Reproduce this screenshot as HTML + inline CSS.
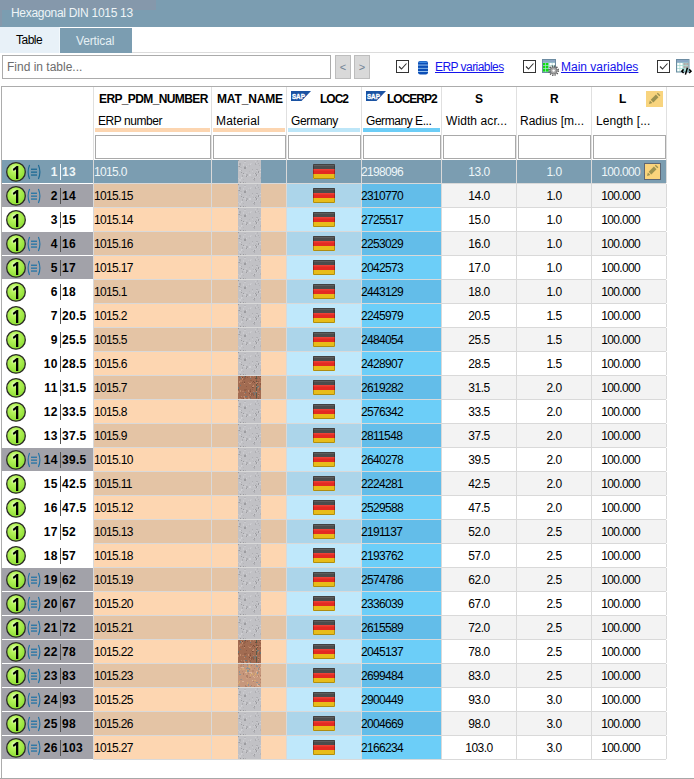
<!DOCTYPE html><html><head><meta charset="utf-8"><style>
*{margin:0;padding:0;box-sizing:border-box}
html,body{width:694px;height:779px;overflow:hidden;background:#fff}
body{position:relative;font-family:"Liberation Sans",sans-serif;font-size:12px;color:#000}
.abs{position:absolute}
.tx{position:absolute;line-height:14px;white-space:nowrap}
.flag{position:absolute;width:22px;height:15px;border-radius:2px;overflow:hidden;box-shadow:inset 0 0 0 1px rgba(0,0,0,.18)}
.flag i{display:block;height:5px}
.circ{position:absolute;left:6px;width:20px;height:20px;border-radius:50%;background:radial-gradient(circle at 40% 35%,#d8ff90 0%,#9be03a 45%,#6cc414 100%);border:1.5px solid #2d3a22}
.circ span{position:absolute;left:0;top:0;width:17px;text-align:center;font-weight:bold;font-size:15px;line-height:17px;color:#000}
.tex{position:absolute;left:238px;width:23px;height:24px}
.pencil{position:absolute;width:17px;height:17px;background:#f7d27e}
.cb{position:absolute;top:60px;width:13px;height:13px;border:1px solid #333;background:#fff}
.cb svg{position:absolute;left:0px;top:0px}
.filt{position:absolute;top:135px;height:24px;border:1px solid #a9a9a9;background:#fff}
.hbar{position:absolute;top:128px;height:4px}
</style></head><body>

<svg width="0" height="0" style="position:absolute">
<defs>
<radialGradient id="gg" cx="0.42" cy="0.32" r="0.75"><stop offset="0" stop-color="#f0ffd8"/><stop offset="0.28" stop-color="#b6f45c"/><stop offset="1" stop-color="#86da2c"/></radialGradient>
<symbol id="circ" viewBox="0 0 22 22"><circle cx="11" cy="10.9" r="9.3" fill="url(#gg)" stroke="#2a2a26" stroke-width="1.3"/>
<path d="M7.8 8.0 L11.6 5.0 L13.3 5.0 L13.3 17.9 L11.0 17.9 L11.0 8.3 L8.6 10.0 Z" fill="#000"/></symbol>
<symbol id="docic" viewBox="0 0 16 16"><path d="M3.6 1 Q0.6 8 3.6 15" fill="none" stroke="currentColor" stroke-width="1.15"/><path d="M12.4 1 Q15.4 8 12.4 15" fill="none" stroke="currentColor" stroke-width="1.15"/>
<rect x="5" y="4.6" width="6" height="1.3" fill="currentColor"/><rect x="5" y="7.5" width="6" height="1.3" fill="currentColor"/><rect x="5" y="10.4" width="6" height="1.3" fill="currentColor"/></symbol>
<symbol id="flag" viewBox="0 0 22 15"><rect x="0" y="0" width="22" height="5" fill="#4c4c4c"/><rect x="0" y="0.6" width="22" height="0.9" fill="#6e6e6e"/>
<rect x="0" y="5" width="22" height="5" fill="#e42a22"/><rect x="0" y="5.3" width="22" height="1" fill="#f04a40"/>
<rect x="0" y="10" width="22" height="5" fill="#e8bc18"/>
<rect x="0.5" y="0.5" width="21" height="14" rx="1" fill="none" stroke="rgba(0,0,0,0.25)" stroke-width="1"/></symbol>
<symbol id="pen" viewBox="0 0 17 16"><path d="M3 13 L3.9 9.6 L6.4 12.1 Z" fill="#9c9250"/><path d="M4.7 8.8 L9.9 3.6 L12.5 6.2 L7.3 11.4 Z" fill="#9c9250"/><path d="M10.8 2.7 L11.8 1.7 L14.4 4.3 L13.4 5.3 Z" fill="#9c9250"/></symbol>
<pattern id="tg" width="23" height="23" patternUnits="userSpaceOnUse"><rect width="23" height="23" fill="#c1c1c5"/><rect x="10" y="4" width="1" height="1" fill="#c8c8cc"/><rect x="17" y="3" width="1" height="2" fill="#bbbbbf"/><rect x="6" y="1" width="2" height="1" fill="#b6b6ba"/><rect x="2" y="7" width="2" height="1" fill="#b6b6ba"/><rect x="18" y="3" width="1" height="2" fill="#cbcbcf"/><rect x="18" y="12" width="1" height="1" fill="#b6b6ba"/><rect x="17" y="4" width="2" height="1" fill="#bbbbbf"/><rect x="17" y="3" width="1" height="2" fill="#aeaeb2"/><rect x="21" y="5" width="1" height="1" fill="#b6b6ba"/><rect x="3" y="17" width="1" height="2" fill="#d0d0d4"/><rect x="1" y="19" width="2" height="2" fill="#cbcbcf"/><rect x="17" y="13" width="1" height="1" fill="#9c9ca0"/><rect x="18" y="14" width="1" height="1" fill="#bbbbbf"/><rect x="5" y="22" width="1" height="1" fill="#9c9ca0"/><rect x="18" y="9" width="2" height="1" fill="#aeaeb2"/><rect x="14" y="9" width="1" height="1" fill="#aeaeb2"/><rect x="16" y="13" width="1" height="1" fill="#cbcbcf"/><rect x="15" y="13" width="1" height="2" fill="#b6b6ba"/><rect x="18" y="10" width="1" height="2" fill="#bbbbbf"/><rect x="15" y="18" width="2" height="1" fill="#9c9ca0"/><rect x="2" y="8" width="1" height="1" fill="#c8c8cc"/><rect x="22" y="9" width="2" height="1" fill="#d0d0d4"/><rect x="22" y="12" width="1" height="1" fill="#d0d0d4"/><rect x="14" y="11" width="1" height="1" fill="#cbcbcf"/><rect x="1" y="6" width="1" height="1" fill="#9c9ca0"/><rect x="7" y="12" width="2" height="1" fill="#c8c8cc"/><rect x="5" y="14" width="1" height="1" fill="#c8c8cc"/><rect x="13" y="17" width="2" height="1" fill="#bbbbbf"/><rect x="21" y="12" width="1" height="1" fill="#cbcbcf"/><rect x="5" y="4" width="1" height="1" fill="#cbcbcf"/><rect x="15" y="18" width="1" height="1" fill="#cbcbcf"/><rect x="0" y="4" width="1" height="2" fill="#c8c8cc"/><rect x="18" y="10" width="1" height="1" fill="#cbcbcf"/><rect x="21" y="17" width="2" height="1" fill="#c8c8cc"/><rect x="12" y="3" width="2" height="1" fill="#c8c8cc"/><rect x="6" y="2" width="2" height="1" fill="#cbcbcf"/><rect x="3" y="10" width="1" height="1" fill="#aeaeb2"/><rect x="0" y="18" width="1" height="1" fill="#cbcbcf"/><rect x="19" y="0" width="1" height="2" fill="#b6b6ba"/><rect x="12" y="4" width="1" height="1" fill="#d0d0d4"/><rect x="19" y="11" width="1" height="1" fill="#c8c8cc"/><rect x="15" y="14" width="2" height="1" fill="#c8c8cc"/><rect x="2" y="4" width="1" height="2" fill="#b6b6ba"/><rect x="8" y="15" width="1" height="2" fill="#9c9ca0"/><rect x="0" y="6" width="1" height="1" fill="#aeaeb2"/><rect x="22" y="17" width="1" height="2" fill="#b6b6ba"/><rect x="2" y="22" width="1" height="2" fill="#9c9ca0"/><rect x="11" y="5" width="1" height="2" fill="#bbbbbf"/><rect x="17" y="16" width="1" height="2" fill="#bbbbbf"/><rect x="6" y="7" width="2" height="2" fill="#9c9ca0"/><rect x="7" y="6" width="2" height="1" fill="#aeaeb2"/><rect x="0" y="0" width="1" height="1" fill="#9c9ca0"/><rect x="8" y="6" width="1" height="1" fill="#d0d0d4"/><rect x="11" y="11" width="1" height="1" fill="#b6b6ba"/><rect x="7" y="15" width="1" height="1" fill="#cbcbcf"/><rect x="15" y="19" width="1" height="1" fill="#aeaeb2"/><rect x="20" y="11" width="1" height="2" fill="#9c9ca0"/><rect x="3" y="12" width="1" height="1" fill="#9c9ca0"/><rect x="5" y="13" width="1" height="1" fill="#9c9ca0"/><rect x="12" y="14" width="1" height="2" fill="#c8c8cc"/><rect x="5" y="5" width="1" height="1" fill="#cbcbcf"/><rect x="18" y="14" width="1" height="2" fill="#9c9ca0"/><rect x="19" y="15" width="1" height="1" fill="#d0d0d4"/><rect x="17" y="17" width="1" height="1" fill="#cbcbcf"/><rect x="20" y="3" width="1" height="1" fill="#aeaeb2"/><rect x="6" y="6" width="1" height="1" fill="#b6b6ba"/><rect x="9" y="16" width="1" height="1" fill="#cbcbcf"/><rect x="17" y="13" width="1" height="1" fill="#9c9ca0"/><rect x="11" y="14" width="2" height="2" fill="#d0d0d4"/><rect x="4" y="17" width="1" height="1" fill="#cbcbcf"/><rect x="5" y="19" width="1" height="1" fill="#b6b6ba"/><rect x="4" y="15" width="1" height="2" fill="#aeaeb2"/><rect x="1" y="10" width="2" height="1" fill="#d0d0d4"/><rect x="17" y="1" width="1" height="1" fill="#cbcbcf"/><rect x="1" y="3" width="2" height="2" fill="#aeaeb2"/><rect x="0" y="2" width="1" height="2" fill="#c8c8cc"/><rect x="16" y="19" width="1" height="2" fill="#aeaeb2"/><rect x="8" y="14" width="2" height="2" fill="#aeaeb2"/><rect x="7" y="22" width="1" height="2" fill="#aeaeb2"/><rect x="6" y="14" width="2" height="1" fill="#cbcbcf"/></pattern><pattern id="tb" width="23" height="23" patternUnits="userSpaceOnUse"><rect width="23" height="23" fill="#a26c52"/><rect x="18" y="0" width="1" height="23" fill="#5a5a48"/><rect x="14" y="17" width="2" height="2" fill="#946048"/><rect x="18" y="6" width="2" height="2" fill="#b47c60"/><rect x="19" y="5" width="2" height="1" fill="#8e5a44"/><rect x="4" y="2" width="1" height="2" fill="#c08a6c"/><rect x="12" y="14" width="1" height="2" fill="#7a4c3a"/><rect x="0" y="16" width="1" height="1" fill="#8e5a44"/><rect x="6" y="7" width="1" height="1" fill="#c08a6c"/><rect x="10" y="14" width="1" height="2" fill="#c08a6c"/><rect x="7" y="20" width="2" height="1" fill="#6e7676"/><rect x="21" y="2" width="1" height="1" fill="#946048"/><rect x="17" y="2" width="1" height="1" fill="#7a4c3a"/><rect x="7" y="16" width="1" height="1" fill="#6e7676"/><rect x="18" y="3" width="1" height="1" fill="#946048"/><rect x="12" y="2" width="1" height="1" fill="#8e5a44"/><rect x="6" y="1" width="2" height="2" fill="#946048"/><rect x="12" y="13" width="1" height="2" fill="#8e5a44"/><rect x="8" y="10" width="1" height="1" fill="#8e5a44"/><rect x="0" y="13" width="1" height="1" fill="#8e5a44"/><rect x="22" y="3" width="1" height="1" fill="#8e5a44"/><rect x="15" y="5" width="1" height="1" fill="#7a4c3a"/><rect x="16" y="6" width="1" height="1" fill="#7a4c3a"/><rect x="20" y="12" width="2" height="1" fill="#8e5a44"/><rect x="6" y="0" width="1" height="1" fill="#6e7676"/><rect x="6" y="5" width="1" height="1" fill="#946048"/><rect x="4" y="6" width="1" height="1" fill="#946048"/><rect x="19" y="10" width="2" height="1" fill="#6e7676"/><rect x="2" y="2" width="1" height="1" fill="#b47c60"/><rect x="19" y="11" width="2" height="1" fill="#6e7676"/><rect x="18" y="15" width="1" height="1" fill="#c08a6c"/><rect x="5" y="20" width="1" height="1" fill="#b47c60"/><rect x="19" y="7" width="1" height="1" fill="#7a4c3a"/><rect x="20" y="17" width="2" height="1" fill="#b47c60"/><rect x="19" y="2" width="1" height="1" fill="#946048"/><rect x="3" y="1" width="1" height="1" fill="#c08a6c"/><rect x="22" y="12" width="2" height="2" fill="#6e7676"/><rect x="15" y="9" width="1" height="2" fill="#c08a6c"/><rect x="2" y="4" width="2" height="2" fill="#b47c60"/><rect x="20" y="19" width="1" height="1" fill="#c08a6c"/><rect x="6" y="6" width="1" height="1" fill="#7a4c3a"/><rect x="8" y="13" width="1" height="1" fill="#946048"/><rect x="1" y="5" width="1" height="2" fill="#6e7676"/><rect x="18" y="4" width="1" height="1" fill="#8e5a44"/><rect x="14" y="10" width="1" height="2" fill="#7a4c3a"/><rect x="1" y="0" width="1" height="2" fill="#946048"/><rect x="9" y="1" width="1" height="1" fill="#8e5a44"/><rect x="2" y="9" width="1" height="1" fill="#6e7676"/><rect x="2" y="14" width="1" height="2" fill="#c08a6c"/><rect x="1" y="22" width="1" height="1" fill="#b47c60"/><rect x="2" y="21" width="1" height="1" fill="#946048"/><rect x="0" y="15" width="1" height="2" fill="#c08a6c"/><rect x="21" y="12" width="1" height="2" fill="#946048"/><rect x="2" y="2" width="1" height="1" fill="#8e5a44"/><rect x="13" y="10" width="2" height="1" fill="#946048"/><rect x="14" y="17" width="1" height="1" fill="#8e5a44"/><rect x="19" y="2" width="1" height="1" fill="#946048"/><rect x="22" y="3" width="2" height="1" fill="#946048"/><rect x="0" y="11" width="1" height="2" fill="#6e7676"/><rect x="19" y="6" width="1" height="1" fill="#c08a6c"/><rect x="21" y="14" width="1" height="1" fill="#946048"/><rect x="12" y="21" width="1" height="2" fill="#6e7676"/><rect x="13" y="6" width="2" height="1" fill="#b47c60"/><rect x="18" y="10" width="1" height="1" fill="#b47c60"/><rect x="15" y="11" width="1" height="1" fill="#8e5a44"/><rect x="5" y="3" width="2" height="1" fill="#946048"/><rect x="6" y="13" width="2" height="2" fill="#946048"/><rect x="10" y="22" width="2" height="1" fill="#c08a6c"/><rect x="2" y="1" width="1" height="2" fill="#6e7676"/><rect x="22" y="8" width="1" height="1" fill="#c08a6c"/><rect x="20" y="18" width="1" height="1" fill="#8e5a44"/><rect x="14" y="6" width="1" height="1" fill="#8e5a44"/><rect x="4" y="1" width="1" height="1" fill="#7a4c3a"/><rect x="3" y="20" width="1" height="1" fill="#c08a6c"/><rect x="21" y="6" width="2" height="1" fill="#b47c60"/><rect x="5" y="22" width="2" height="2" fill="#8e5a44"/><rect x="22" y="1" width="1" height="1" fill="#b47c60"/><rect x="11" y="17" width="1" height="1" fill="#7a4c3a"/><rect x="22" y="7" width="2" height="2" fill="#8e5a44"/><rect x="12" y="4" width="2" height="1" fill="#946048"/><rect x="20" y="0" width="1" height="1" fill="#946048"/><rect x="10" y="20" width="1" height="2" fill="#b47c60"/><rect x="20" y="22" width="1" height="1" fill="#8e5a44"/><rect x="12" y="2" width="1" height="1" fill="#6e7676"/><rect x="22" y="0" width="1" height="1" fill="#6e7676"/><rect x="14" y="10" width="2" height="1" fill="#c08a6c"/><rect x="15" y="0" width="1" height="1" fill="#b47c60"/><rect x="1" y="5" width="1" height="2" fill="#c08a6c"/><rect x="4" y="15" width="2" height="1" fill="#b47c60"/><rect x="18" y="22" width="1" height="1" fill="#8e5a44"/><rect x="16" y="17" width="1" height="2" fill="#6e7676"/><rect x="16" y="17" width="1" height="2" fill="#6e7676"/><rect x="12" y="19" width="1" height="1" fill="#b47c60"/><rect x="17" y="16" width="2" height="1" fill="#6e7676"/><rect x="13" y="17" width="1" height="2" fill="#8e5a44"/><rect x="12" y="0" width="1" height="2" fill="#c08a6c"/><rect x="12" y="17" width="1" height="1" fill="#c08a6c"/><rect x="2" y="22" width="1" height="2" fill="#b47c60"/><rect x="14" y="13" width="1" height="1" fill="#946048"/><rect x="15" y="15" width="1" height="1" fill="#b47c60"/><rect x="15" y="16" width="1" height="1" fill="#6e7676"/><rect x="13" y="19" width="1" height="1" fill="#8e5a44"/><rect x="22" y="0" width="1" height="1" fill="#8e5a44"/><rect x="7" y="0" width="1" height="1" fill="#7a4c3a"/><rect x="11" y="7" width="2" height="1" fill="#c08a6c"/><rect x="15" y="18" width="1" height="2" fill="#8e5a44"/><rect x="6" y="22" width="2" height="1" fill="#c08a6c"/><rect x="12" y="20" width="1" height="2" fill="#946048"/><rect x="6" y="20" width="1" height="2" fill="#c08a6c"/><rect x="6" y="17" width="1" height="1" fill="#c08a6c"/><rect x="20" y="11" width="1" height="2" fill="#b47c60"/><rect x="10" y="6" width="1" height="1" fill="#b47c60"/></pattern><pattern id="tp" width="23" height="23" patternUnits="userSpaceOnUse"><rect width="23" height="23" fill="#c6977c"/><rect x="8" y="9" width="1" height="2" fill="#d0a080"/><rect x="7" y="21" width="1" height="2" fill="#b08068"/><rect x="5" y="4" width="1" height="2" fill="#d6aa70"/><rect x="9" y="0" width="1" height="2" fill="#8e9494"/><rect x="19" y="0" width="1" height="1" fill="#dcb498"/><rect x="8" y="14" width="2" height="1" fill="#d0a080"/><rect x="8" y="11" width="2" height="2" fill="#b08068"/><rect x="18" y="13" width="1" height="1" fill="#d0a080"/><rect x="20" y="10" width="1" height="1" fill="#d0a080"/><rect x="19" y="20" width="2" height="2" fill="#dcb498"/><rect x="19" y="4" width="2" height="2" fill="#8e9494"/><rect x="5" y="9" width="1" height="2" fill="#b08068"/><rect x="11" y="8" width="2" height="1" fill="#dcb498"/><rect x="19" y="8" width="1" height="2" fill="#8e9494"/><rect x="15" y="17" width="1" height="1" fill="#b08068"/><rect x="22" y="11" width="1" height="1" fill="#b08068"/><rect x="20" y="20" width="2" height="1" fill="#8e9494"/><rect x="13" y="1" width="1" height="1" fill="#b08068"/><rect x="22" y="14" width="1" height="1" fill="#d0a080"/><rect x="13" y="8" width="1" height="2" fill="#dcb498"/><rect x="20" y="11" width="1" height="2" fill="#ba8a70"/><rect x="19" y="7" width="2" height="1" fill="#d0a080"/><rect x="19" y="1" width="1" height="1" fill="#ba8a70"/><rect x="18" y="18" width="1" height="1" fill="#dcb498"/><rect x="6" y="5" width="1" height="1" fill="#d0a080"/><rect x="5" y="2" width="1" height="1" fill="#8e9494"/><rect x="10" y="20" width="1" height="1" fill="#d6aa70"/><rect x="9" y="3" width="1" height="1" fill="#8e9494"/><rect x="18" y="19" width="1" height="1" fill="#d0a080"/><rect x="16" y="11" width="1" height="1" fill="#d6aa70"/><rect x="10" y="4" width="2" height="1" fill="#8e9494"/><rect x="21" y="6" width="1" height="1" fill="#dcb498"/><rect x="16" y="22" width="1" height="1" fill="#b08068"/><rect x="13" y="21" width="1" height="1" fill="#b08068"/><rect x="18" y="7" width="1" height="2" fill="#dcb498"/><rect x="9" y="13" width="1" height="1" fill="#b08068"/><rect x="1" y="10" width="2" height="1" fill="#8e9494"/><rect x="2" y="1" width="1" height="2" fill="#ba8a70"/><rect x="9" y="6" width="2" height="2" fill="#8e9494"/><rect x="12" y="10" width="1" height="2" fill="#d6aa70"/><rect x="13" y="4" width="1" height="1" fill="#b08068"/><rect x="11" y="5" width="1" height="1" fill="#b08068"/><rect x="19" y="12" width="1" height="1" fill="#dcb498"/><rect x="4" y="3" width="2" height="1" fill="#dcb498"/><rect x="18" y="18" width="1" height="1" fill="#8e9494"/><rect x="17" y="9" width="1" height="1" fill="#b08068"/><rect x="5" y="17" width="1" height="1" fill="#d0a080"/><rect x="7" y="21" width="1" height="1" fill="#b08068"/><rect x="11" y="2" width="1" height="1" fill="#dcb498"/><rect x="1" y="22" width="1" height="2" fill="#b08068"/><rect x="14" y="6" width="2" height="2" fill="#ba8a70"/><rect x="1" y="17" width="1" height="2" fill="#d6aa70"/><rect x="4" y="17" width="2" height="1" fill="#dcb498"/><rect x="4" y="17" width="1" height="1" fill="#dcb498"/><rect x="11" y="1" width="1" height="2" fill="#d6aa70"/><rect x="0" y="3" width="1" height="1" fill="#ba8a70"/><rect x="10" y="20" width="1" height="2" fill="#8e9494"/><rect x="21" y="22" width="1" height="1" fill="#d0a080"/><rect x="3" y="3" width="2" height="1" fill="#dcb498"/><rect x="15" y="12" width="1" height="1" fill="#dcb498"/><rect x="14" y="9" width="1" height="2" fill="#d6aa70"/><rect x="8" y="8" width="1" height="1" fill="#dcb498"/><rect x="11" y="13" width="2" height="1" fill="#b08068"/><rect x="8" y="4" width="2" height="1" fill="#8e9494"/><rect x="12" y="22" width="1" height="1" fill="#8e9494"/><rect x="18" y="1" width="1" height="1" fill="#8e9494"/><rect x="3" y="0" width="1" height="1" fill="#ba8a70"/><rect x="2" y="15" width="1" height="1" fill="#ba8a70"/><rect x="22" y="20" width="2" height="1" fill="#d0a080"/><rect x="17" y="0" width="1" height="1" fill="#d0a080"/><rect x="19" y="4" width="1" height="2" fill="#d0a080"/><rect x="16" y="13" width="1" height="1" fill="#dcb498"/><rect x="0" y="19" width="1" height="1" fill="#d6aa70"/><rect x="16" y="16" width="2" height="1" fill="#d6aa70"/><rect x="20" y="7" width="1" height="2" fill="#ba8a70"/><rect x="22" y="13" width="1" height="1" fill="#b08068"/><rect x="11" y="4" width="1" height="1" fill="#8e9494"/><rect x="21" y="11" width="1" height="2" fill="#d0a080"/><rect x="9" y="18" width="1" height="2" fill="#d6aa70"/><rect x="4" y="4" width="1" height="2" fill="#d0a080"/><rect x="3" y="1" width="1" height="2" fill="#ba8a70"/><rect x="16" y="0" width="1" height="1" fill="#8e9494"/><rect x="18" y="18" width="2" height="1" fill="#8e9494"/><rect x="14" y="16" width="1" height="1" fill="#dcb498"/><rect x="21" y="3" width="1" height="1" fill="#b08068"/><rect x="18" y="2" width="2" height="1" fill="#8e9494"/><rect x="0" y="22" width="2" height="1" fill="#8e9494"/><rect x="15" y="18" width="1" height="1" fill="#d0a080"/><rect x="8" y="6" width="1" height="2" fill="#d6aa70"/><rect x="10" y="9" width="1" height="1" fill="#ba8a70"/><rect x="17" y="9" width="1" height="2" fill="#d6aa70"/><rect x="2" y="3" width="1" height="1" fill="#d0a080"/><rect x="17" y="12" width="1" height="1" fill="#d0a080"/><rect x="5" y="0" width="1" height="1" fill="#b08068"/><rect x="1" y="7" width="1" height="2" fill="#8e9494"/><rect x="22" y="13" width="1" height="1" fill="#d0a080"/><rect x="16" y="4" width="1" height="1" fill="#d6aa70"/><rect x="19" y="1" width="1" height="1" fill="#ba8a70"/><rect x="22" y="13" width="2" height="1" fill="#dcb498"/><rect x="7" y="8" width="2" height="1" fill="#dcb498"/><rect x="8" y="22" width="1" height="2" fill="#b08068"/><rect x="2" y="5" width="1" height="1" fill="#d6aa70"/><rect x="4" y="7" width="1" height="1" fill="#ba8a70"/><rect x="3" y="15" width="1" height="1" fill="#8e9494"/><rect x="22" y="18" width="2" height="1" fill="#ba8a70"/><rect x="22" y="15" width="2" height="1" fill="#b08068"/><rect x="11" y="3" width="2" height="1" fill="#d6aa70"/><rect x="22" y="3" width="2" height="1" fill="#dcb498"/><rect x="13" y="4" width="1" height="2" fill="#d0a080"/><rect x="16" y="4" width="1" height="1" fill="#b08068"/></pattern><filter id="noise" x="0" y="0" width="100%" height="100%"><feTurbulence type="fractalNoise" baseFrequency="0.85" numOctaves="2" seed="3"/><feColorMatrix type="matrix" values="0 0 0 0 0.5  0 0 0 0 0.5  0 0 0 0 0.5  1.2 0 0 0 -0.35"/></filter>
</defs></svg>

<div class="abs" style="left:0;top:0;width:694px;height:27px;background:#7b9db1"></div>
<div class="abs" style="left:0;top:0;width:156px;height:10px;background:#8598ab"></div>
<div class="abs" style="left:0;top:0;width:2px;height:26px;background:#8598ab"></div>
<div class="tx" style="left:11px;top:6px;font-size:12px;letter-spacing:-0.3px;color:#eef4f6;">Hexagonal DIN 1015 13</div>
<div class="abs" style="left:0;top:27px;width:59px;height:26px;background:#e8f1f8"></div>
<div class="abs" style="left:59px;top:27px;width:1px;height:26px;background:#f2f8fc"></div>
<div class="abs" style="left:60px;top:28px;width:72px;height:25px;background:#7b9db1"></div>
<div class="abs" style="left:132px;top:52px;width:562px;height:1px;background:#dcdcdc"></div>
<div class="tx" style="left:16px;top:33px;font-size:12px;letter-spacing:-0.5px;color:#000;">Table</div>
<div class="tx" style="left:76px;top:34px;font-size:12px;letter-spacing:-0.14px;color:#e6f0f4;">Vertical</div>
<div class="abs" style="left:2px;top:55px;width:329px;height:24px;border:1px solid #ababab;background:#fff"></div>
<div class="tx" style="left:7px;top:60px;font-size:12px;letter-spacing:0px;color:#6d6d6d;">Find in table...</div>
<div class="abs" style="left:335px;top:55px;width:16px;height:24px;background:#d9d9d9;border:1px solid #bdbdbd"></div>
<div class="tx" style="left:335px;width:16px;text-align:center;top:60px;font-size:11px;color:#6f8294">&lt;</div>
<div class="abs" style="left:354px;top:55px;width:16px;height:24px;background:#d9d9d9;border:1px solid #bdbdbd"></div>
<div class="tx" style="left:354px;width:16px;text-align:center;top:60px;font-size:11px;color:#6f8294">&gt;</div>
<div class="cb" style="left:396px"><svg width="11" height="11" viewBox="0 0 11 11"><path d="M2 5.5 L4.5 8 L9.5 2.5" fill="none" stroke="#333" stroke-width="1.1"/></svg></div>
<svg class="abs" style="left:418px;top:61px" width="10" height="14" viewBox="0 0 10 14">
<rect x="0" y="0" width="10" height="13.5" rx="2.2" fill="#0c4eb6"/>
<rect x="1" y="0.4" width="8" height="1.6" rx="0.8" fill="#3c88e0"/>
<rect x="0" y="3.6" width="10" height="0.9" fill="#a8d0f4"/>
<rect x="0" y="6.9" width="10" height="0.9" fill="#8cbcec"/>
<rect x="0" y="10.1" width="10" height="0.9" fill="#a8d0f4"/>
</svg>
<div class="tx" style="left:435px;top:60px;font-size:12px;letter-spacing:-0.55px;color:#1414ec;text-decoration:underline">ERP variables</div>
<div class="cb" style="left:523px"><svg width="11" height="11" viewBox="0 0 11 11"><path d="M2 5.5 L4.5 8 L9.5 2.5" fill="none" stroke="#333" stroke-width="1.1"/></svg></div>
<svg class="abs" style="left:541px;top:58px" width="19" height="19" viewBox="0 0 19 19">
<rect x="1.5" y="1.5" width="13" height="13" fill="#a9ddd6" stroke="#6c8ca2"/>
<rect x="2" y="2" width="12" height="2.6" fill="#8aa6c4"/>
<rect x="2" y="5" width="2.3" height="2.3" fill="#10dc10"/><rect x="5" y="5" width="2.3" height="2.3" fill="#10dc10"/>
<rect x="8.5" y="5" width="2.3" height="2.3" fill="#fff"/><rect x="11.5" y="5" width="2.3" height="2.3" fill="#fff"/>
<rect x="2" y="8" width="2.3" height="2.3" fill="#10dc10"/><rect x="5" y="8" width="2.3" height="2.3" fill="#10dc10"/>
<rect x="8.5" y="8" width="2.3" height="2.3" fill="#fff"/>
<rect x="2" y="11" width="2.3" height="2.6" fill="#10dc10"/><rect x="5" y="11" width="2.6" height="2.6" fill="#10dc10"/>
<circle cx="12.6" cy="12.6" r="4.6" fill="none" stroke="#5a5a5a" stroke-width="1.6" stroke-dasharray="1.3 1.1"/>
<circle cx="12.6" cy="12.6" r="3.4" fill="#a8a8a8" stroke="#6a6a6a" stroke-width="0.8"/>
<circle cx="12.6" cy="12.6" r="1.2" fill="#fff"/>
</svg>
<div class="tx" style="left:561px;top:60px;font-size:12px;letter-spacing:0px;color:#1414ec;text-decoration:underline">Main variables</div>
<div class="cb" style="left:657px"><svg width="11" height="11" viewBox="0 0 11 11"><path d="M2 5.5 L4.5 8 L9.5 2.5" fill="none" stroke="#333" stroke-width="1.1"/></svg></div>
<svg class="abs" style="left:675px;top:58px" width="19" height="19" viewBox="0 0 19 19">
<rect x="1.5" y="1.5" width="12.5" height="12.5" fill="#a9ddd6" stroke="#6c8ca2"/>
<rect x="2" y="2" width="11.5" height="2.6" fill="#8aa6c4"/>
<rect x="2.3" y="5" width="2.2" height="2.2" fill="#fff"/><rect x="5.3" y="5" width="2.2" height="2.2" fill="#fff"/>
<rect x="8.5" y="5" width="2.2" height="2.2" fill="#b4a8a8"/><rect x="11.3" y="5" width="2.2" height="2.2" fill="#b4a8a8"/>
<rect x="2.3" y="8" width="2.2" height="2.2" fill="#fff"/><rect x="5.3" y="8" width="2.2" height="2.2" fill="#fff"/>
<rect x="8.5" y="8" width="2.2" height="2.2" fill="#b4a8a8"/><rect x="11.3" y="8" width="2.2" height="2.2" fill="#b4a8a8"/>
<rect x="2.3" y="11" width="2.2" height="2.2" fill="#fff"/><rect x="5.3" y="11" width="2.2" height="2.2" fill="#fff"/>
<path d="M8.6 11.4 L6.8 13.2 L8.6 15 M14.2 11.4 L16 13.2 L14.2 15 M12.4 9.8 L10.4 16.6" stroke="#000" stroke-width="1.5" fill="none"/>
</svg>
<div class="abs" style="left:1px;top:86px;width:693px;height:1px;background:#acacac"></div>
<div class="abs" style="left:1px;top:86px;width:1px;height:693px;background:#acacac"></div>
<div class="abs" style="left:0;top:778px;width:694px;height:1px;background:#a8a8a8"></div>
<div class="abs" style="left:93px;top:87px;width:1px;height:73px;background:#e0e0e0"></div>
<div class="abs" style="left:211px;top:87px;width:1px;height:73px;background:#e0e0e0"></div>
<div class="abs" style="left:286px;top:87px;width:1px;height:73px;background:#e0e0e0"></div>
<div class="abs" style="left:361px;top:87px;width:1px;height:73px;background:#e0e0e0"></div>
<div class="abs" style="left:441px;top:87px;width:1px;height:73px;background:#e0e0e0"></div>
<div class="abs" style="left:516px;top:87px;width:1px;height:73px;background:#e0e0e0"></div>
<div class="abs" style="left:591px;top:87px;width:1px;height:73px;background:#e0e0e0"></div>
<div class="abs" style="left:666px;top:87px;width:1px;height:73px;background:#e0e0e0"></div>
<div class="tx" style="left:99px;top:92px;font-size:12px;font-weight:bold;letter-spacing:-0.62px;color:#000;">ERP_PDM_NUMBER</div>
<div class="tx" style="left:217px;top:92px;font-size:12px;font-weight:bold;letter-spacing:-0.14px;color:#000;">MAT_NAME</div>
<svg class="abs" style="left:291px;top:91px" width="20" height="10" viewBox="0 0 20 10">
<path d="M0 0 H20 L10.5 10 H0 Z" fill="#1a52a2"/>
<text x="0.9" y="7.9" font-family="Liberation Sans" font-weight="bold" font-size="7.4" fill="#fff" stroke="#fff" stroke-width="0.35" textLength="13" lengthAdjust="spacingAndGlyphs">SAP</text></svg>
<div class="tx" style="left:320px;top:92px;font-size:12px;font-weight:bold;letter-spacing:-1.0px;color:#000;">LOC2</div>
<svg class="abs" style="left:366px;top:91px" width="20" height="10" viewBox="0 0 20 10">
<path d="M0 0 H20 L10.5 10 H0 Z" fill="#1a52a2"/>
<text x="0.9" y="7.9" font-family="Liberation Sans" font-weight="bold" font-size="7.4" fill="#fff" stroke="#fff" stroke-width="0.35" textLength="13" lengthAdjust="spacingAndGlyphs">SAP</text></svg>
<div class="tx" style="left:387px;top:92px;font-size:12px;font-weight:bold;letter-spacing:-1.0px;color:#000;">LOCERP2</div>
<div class="tx" style="left:475px;top:92px;font-size:12px;font-weight:bold;letter-spacing:0px;color:#000;">S</div>
<div class="tx" style="left:550px;top:92px;font-size:12px;font-weight:bold;letter-spacing:0px;color:#000;">R</div>
<div class="tx" style="left:619px;top:92px;font-size:12px;font-weight:bold;letter-spacing:0px;color:#000;">L</div>
<div class="abs" style="left:646px;top:91px;width:17px;height:16px;background:#f8d47e"></div><svg class="abs" style="left:646px;top:91px" width="17" height="16"><use href="#pen"/></svg>
<div class="tx" style="left:98px;top:114px;font-size:12px;letter-spacing:-0.44px;color:#000;">ERP number</div>
<div class="tx" style="left:216px;top:114px;font-size:12px;letter-spacing:0.14px;color:#000;">Material</div>
<div class="tx" style="left:291px;top:114px;font-size:12px;letter-spacing:-0.33px;color:#000;">Germany</div>
<div class="tx" style="left:366px;top:114px;font-size:12px;letter-spacing:-0.45px;color:#000;">Germany E...</div>
<div class="tx" style="left:446px;top:114px;font-size:12px;letter-spacing:0.09px;color:#000;">Width acr...</div>
<div class="tx" style="left:520px;top:114px;font-size:12px;letter-spacing:0px;color:#000;">Radius [m...</div>
<div class="tx" style="left:596px;top:114px;font-size:12px;letter-spacing:0.1px;color:#000;">Length [...</div>
<div class="hbar" style="left:95px;width:115px;background:#fcd5b0"></div>
<div class="hbar" style="left:213px;width:72px;background:#fcd5b0"></div>
<div class="hbar" style="left:288px;width:72px;background:#bde6f8"></div>
<div class="hbar" style="left:363px;width:77px;background:#6ccdf6"></div>
<div class="filt" style="left:95px;width:116px"></div>
<div class="filt" style="left:213px;width:73px"></div>
<div class="filt" style="left:288px;width:73px"></div>
<div class="filt" style="left:363px;width:78px"></div>
<div class="filt" style="left:443px;width:73px"></div>
<div class="filt" style="left:518px;width:73px"></div>
<div class="filt" style="left:593px;width:73px"></div>
<div class="abs" style="left:2px;top:160px;width:91px;height:23px;background:#7b9db1"></div>
<div class="abs" style="left:93px;top:160px;width:118px;height:23px;background:#7b9db1"></div>
<div class="abs" style="left:211px;top:160px;width:75px;height:23px;background:#7b9db1"></div>
<div class="abs" style="left:286px;top:160px;width:75px;height:23px;background:#7b9db1"></div>
<div class="abs" style="left:361px;top:160px;width:80px;height:23px;background:#7b9db1"></div>
<div class="abs" style="left:441px;top:160px;width:75px;height:23px;background:#7b9db1"></div>
<div class="abs" style="left:516px;top:160px;width:75px;height:23px;background:#7b9db1"></div>
<div class="abs" style="left:591px;top:160px;width:75px;height:23px;background:#7b9db1"></div>
<div class="abs" style="left:93px;top:183px;width:573px;height:1px;background:#d9d9d9"></div>
<div class="abs" style="left:2px;top:183px;width:91px;height:1px;background:#ffffff"></div>
<div class="abs" style="left:93px;top:160px;width:1px;height:23px;background:#d9d9d9"></div>
<div class="abs" style="left:211px;top:160px;width:1px;height:23px;background:#d9d9d9"></div>
<div class="abs" style="left:286px;top:160px;width:1px;height:23px;background:#d9d9d9"></div>
<div class="abs" style="left:361px;top:160px;width:1px;height:23px;background:#d9d9d9"></div>
<div class="abs" style="left:441px;top:160px;width:1px;height:23px;background:#d9d9d9"></div>
<div class="abs" style="left:516px;top:160px;width:1px;height:23px;background:#d9d9d9"></div>
<div class="abs" style="left:591px;top:160px;width:1px;height:23px;background:#d9d9d9"></div>
<div class="abs" style="left:666px;top:160px;width:1px;height:23px;background:#d9d9d9"></div>
<svg class="abs" style="left:238px;top:160px" width="23" height="23"><rect width="23" height="23" fill="url(#tg)"/></svg>
<svg class="abs" style="left:5px;top:161px" width="22" height="22"><use href="#circ"/></svg>
<svg class="abs" style="left:26px;top:164px;color:#1d6a94" width="16" height="16"><use href="#docic"/></svg>
<div class="tx" style="left:0px;width:58px;text-align:right;top:165px;font-size:12px;font-weight:bold;letter-spacing:0.5px;color:#eef6f8;margin-right:0.5px;">1</div>
<div class="abs" style="left:60px;top:164px;width:1px;height:16px;background:#f4f8fa"></div>
<div class="tx" style="left:62px;top:165px;font-size:12px;font-weight:bold;letter-spacing:0.3px;color:#eef6f8;">13</div>
<div class="tx" style="left:94px;top:165px;font-size:12px;letter-spacing:-0.67px;color:#eef6f8;">1015.0</div>
<svg class="abs" style="left:313px;top:164px" width="22" height="15"><use href="#flag"/></svg>
<div class="tx" style="left:361px;top:165px;font-size:12px;letter-spacing:-0.67px;color:#eef6f8;">2198096</div>
<div class="tx" style="left:441px;width:76px;text-align:center;top:165px;font-size:12px;letter-spacing:-0.5px;color:#eef6f8;padding-left:-0.5px;">13.0</div>
<div class="tx" style="left:516px;width:76px;text-align:center;top:165px;font-size:12px;letter-spacing:-0.5px;color:#eef6f8;padding-left:-0.5px;">1.0</div>
<div class="tx" style="left:591px;width:49px;text-align:right;top:165px;font-size:12px;letter-spacing:-0.67px;color:#eef6f8;margin-right:-0.67px;">100.000</div>
<div class="abs" style="left:644px;top:163px;border:1px solid #5e6673;width:17px;height:17px;background:#fad47c"></div><svg class="abs" style="left:644px;top:163px" width="17" height="16"><use href="#pen"/></svg>
<div class="abs" style="left:2px;top:184px;width:91px;height:23px;background:#a2a2a9"></div>
<div class="abs" style="left:93px;top:184px;width:118px;height:23px;background:#e4c4a5"></div>
<div class="abs" style="left:211px;top:184px;width:75px;height:23px;background:#e4c4a5"></div>
<div class="abs" style="left:286px;top:184px;width:75px;height:23px;background:#acd5ea"></div>
<div class="abs" style="left:361px;top:184px;width:80px;height:23px;background:#63bde9"></div>
<div class="abs" style="left:441px;top:184px;width:75px;height:23px;background:#f3f3f3"></div>
<div class="abs" style="left:516px;top:184px;width:75px;height:23px;background:#f3f3f3"></div>
<div class="abs" style="left:591px;top:184px;width:75px;height:23px;background:#f3f3f3"></div>
<div class="abs" style="left:93px;top:207px;width:573px;height:1px;background:#d9d9d9"></div>
<div class="abs" style="left:2px;top:207px;width:91px;height:1px;background:#ffffff"></div>
<div class="abs" style="left:93px;top:184px;width:1px;height:23px;background:#d9d9d9"></div>
<div class="abs" style="left:211px;top:184px;width:1px;height:23px;background:#d9d9d9"></div>
<div class="abs" style="left:286px;top:184px;width:1px;height:23px;background:#d9d9d9"></div>
<div class="abs" style="left:361px;top:184px;width:1px;height:23px;background:#d9d9d9"></div>
<div class="abs" style="left:441px;top:184px;width:1px;height:23px;background:#d9d9d9"></div>
<div class="abs" style="left:516px;top:184px;width:1px;height:23px;background:#d9d9d9"></div>
<div class="abs" style="left:591px;top:184px;width:1px;height:23px;background:#d9d9d9"></div>
<div class="abs" style="left:666px;top:184px;width:1px;height:23px;background:#d9d9d9"></div>
<svg class="abs" style="left:238px;top:184px" width="23" height="23"><rect width="23" height="23" fill="url(#tg)"/></svg>
<svg class="abs" style="left:5px;top:185px" width="22" height="22"><use href="#circ"/></svg>
<svg class="abs" style="left:26px;top:188px;color:#2474a6" width="16" height="16"><use href="#docic"/></svg>
<div class="tx" style="left:0px;width:58px;text-align:right;top:189px;font-size:12px;font-weight:bold;letter-spacing:0.5px;color:#000;margin-right:0.5px;">2</div>
<div class="abs" style="left:60px;top:188px;width:1px;height:16px;background:#505050"></div>
<div class="tx" style="left:62px;top:189px;font-size:12px;font-weight:bold;letter-spacing:0.3px;color:#000;">14</div>
<div class="tx" style="left:94px;top:189px;font-size:12px;letter-spacing:-0.67px;color:#000;">1015.15</div>
<svg class="abs" style="left:313px;top:188px" width="22" height="15"><use href="#flag"/></svg>
<div class="tx" style="left:361px;top:189px;font-size:12px;letter-spacing:-0.67px;color:#000;">2310770</div>
<div class="tx" style="left:441px;width:76px;text-align:center;top:189px;font-size:12px;letter-spacing:-0.5px;color:#000;padding-left:-0.5px;">14.0</div>
<div class="tx" style="left:516px;width:76px;text-align:center;top:189px;font-size:12px;letter-spacing:-0.5px;color:#000;padding-left:-0.5px;">1.0</div>
<div class="tx" style="left:591px;width:49px;text-align:right;top:189px;font-size:12px;letter-spacing:-0.67px;color:#000;margin-right:-0.67px;">100.000</div>
<div class="abs" style="left:2px;top:208px;width:91px;height:23px;background:#ffffff"></div>
<div class="abs" style="left:93px;top:208px;width:118px;height:23px;background:#fdd6b1"></div>
<div class="abs" style="left:211px;top:208px;width:75px;height:23px;background:#fdd6b1"></div>
<div class="abs" style="left:286px;top:208px;width:75px;height:23px;background:#bfe8fb"></div>
<div class="abs" style="left:361px;top:208px;width:80px;height:23px;background:#6ccef8"></div>
<div class="abs" style="left:441px;top:208px;width:75px;height:23px;background:#ffffff"></div>
<div class="abs" style="left:516px;top:208px;width:75px;height:23px;background:#ffffff"></div>
<div class="abs" style="left:591px;top:208px;width:75px;height:23px;background:#ffffff"></div>
<div class="abs" style="left:93px;top:231px;width:573px;height:1px;background:#d9d9d9"></div>
<div class="abs" style="left:2px;top:231px;width:91px;height:1px;background:#ffffff"></div>
<div class="abs" style="left:93px;top:208px;width:1px;height:23px;background:#d9d9d9"></div>
<div class="abs" style="left:211px;top:208px;width:1px;height:23px;background:#d9d9d9"></div>
<div class="abs" style="left:286px;top:208px;width:1px;height:23px;background:#d9d9d9"></div>
<div class="abs" style="left:361px;top:208px;width:1px;height:23px;background:#d9d9d9"></div>
<div class="abs" style="left:441px;top:208px;width:1px;height:23px;background:#d9d9d9"></div>
<div class="abs" style="left:516px;top:208px;width:1px;height:23px;background:#d9d9d9"></div>
<div class="abs" style="left:591px;top:208px;width:1px;height:23px;background:#d9d9d9"></div>
<div class="abs" style="left:666px;top:208px;width:1px;height:23px;background:#d9d9d9"></div>
<svg class="abs" style="left:238px;top:208px" width="23" height="23"><rect width="23" height="23" fill="url(#tg)"/></svg>
<svg class="abs" style="left:5px;top:209px" width="22" height="22"><use href="#circ"/></svg>
<div class="tx" style="left:0px;width:58px;text-align:right;top:213px;font-size:12px;font-weight:bold;letter-spacing:0.5px;color:#000;margin-right:0.5px;">3</div>
<div class="abs" style="left:60px;top:212px;width:1px;height:16px;background:#505050"></div>
<div class="tx" style="left:62px;top:213px;font-size:12px;font-weight:bold;letter-spacing:0.3px;color:#000;">15</div>
<div class="tx" style="left:94px;top:213px;font-size:12px;letter-spacing:-0.67px;color:#000;">1015.14</div>
<svg class="abs" style="left:313px;top:212px" width="22" height="15"><use href="#flag"/></svg>
<div class="tx" style="left:361px;top:213px;font-size:12px;letter-spacing:-0.67px;color:#000;">2725517</div>
<div class="tx" style="left:441px;width:76px;text-align:center;top:213px;font-size:12px;letter-spacing:-0.5px;color:#000;padding-left:-0.5px;">15.0</div>
<div class="tx" style="left:516px;width:76px;text-align:center;top:213px;font-size:12px;letter-spacing:-0.5px;color:#000;padding-left:-0.5px;">1.0</div>
<div class="tx" style="left:591px;width:49px;text-align:right;top:213px;font-size:12px;letter-spacing:-0.67px;color:#000;margin-right:-0.67px;">100.000</div>
<div class="abs" style="left:2px;top:232px;width:91px;height:23px;background:#a2a2a9"></div>
<div class="abs" style="left:93px;top:232px;width:118px;height:23px;background:#e4c4a5"></div>
<div class="abs" style="left:211px;top:232px;width:75px;height:23px;background:#e4c4a5"></div>
<div class="abs" style="left:286px;top:232px;width:75px;height:23px;background:#acd5ea"></div>
<div class="abs" style="left:361px;top:232px;width:80px;height:23px;background:#63bde9"></div>
<div class="abs" style="left:441px;top:232px;width:75px;height:23px;background:#f3f3f3"></div>
<div class="abs" style="left:516px;top:232px;width:75px;height:23px;background:#f3f3f3"></div>
<div class="abs" style="left:591px;top:232px;width:75px;height:23px;background:#f3f3f3"></div>
<div class="abs" style="left:93px;top:255px;width:573px;height:1px;background:#d9d9d9"></div>
<div class="abs" style="left:2px;top:255px;width:91px;height:1px;background:#ffffff"></div>
<div class="abs" style="left:93px;top:232px;width:1px;height:23px;background:#d9d9d9"></div>
<div class="abs" style="left:211px;top:232px;width:1px;height:23px;background:#d9d9d9"></div>
<div class="abs" style="left:286px;top:232px;width:1px;height:23px;background:#d9d9d9"></div>
<div class="abs" style="left:361px;top:232px;width:1px;height:23px;background:#d9d9d9"></div>
<div class="abs" style="left:441px;top:232px;width:1px;height:23px;background:#d9d9d9"></div>
<div class="abs" style="left:516px;top:232px;width:1px;height:23px;background:#d9d9d9"></div>
<div class="abs" style="left:591px;top:232px;width:1px;height:23px;background:#d9d9d9"></div>
<div class="abs" style="left:666px;top:232px;width:1px;height:23px;background:#d9d9d9"></div>
<svg class="abs" style="left:238px;top:232px" width="23" height="23"><rect width="23" height="23" fill="url(#tg)"/></svg>
<svg class="abs" style="left:5px;top:233px" width="22" height="22"><use href="#circ"/></svg>
<svg class="abs" style="left:26px;top:236px;color:#2474a6" width="16" height="16"><use href="#docic"/></svg>
<div class="tx" style="left:0px;width:58px;text-align:right;top:237px;font-size:12px;font-weight:bold;letter-spacing:0.5px;color:#000;margin-right:0.5px;">4</div>
<div class="abs" style="left:60px;top:236px;width:1px;height:16px;background:#505050"></div>
<div class="tx" style="left:62px;top:237px;font-size:12px;font-weight:bold;letter-spacing:0.3px;color:#000;">16</div>
<div class="tx" style="left:94px;top:237px;font-size:12px;letter-spacing:-0.67px;color:#000;">1015.16</div>
<svg class="abs" style="left:313px;top:236px" width="22" height="15"><use href="#flag"/></svg>
<div class="tx" style="left:361px;top:237px;font-size:12px;letter-spacing:-0.67px;color:#000;">2253029</div>
<div class="tx" style="left:441px;width:76px;text-align:center;top:237px;font-size:12px;letter-spacing:-0.5px;color:#000;padding-left:-0.5px;">16.0</div>
<div class="tx" style="left:516px;width:76px;text-align:center;top:237px;font-size:12px;letter-spacing:-0.5px;color:#000;padding-left:-0.5px;">1.0</div>
<div class="tx" style="left:591px;width:49px;text-align:right;top:237px;font-size:12px;letter-spacing:-0.67px;color:#000;margin-right:-0.67px;">100.000</div>
<div class="abs" style="left:2px;top:256px;width:91px;height:23px;background:#a2a2a9"></div>
<div class="abs" style="left:93px;top:256px;width:118px;height:23px;background:#fdd6b1"></div>
<div class="abs" style="left:211px;top:256px;width:75px;height:23px;background:#fdd6b1"></div>
<div class="abs" style="left:286px;top:256px;width:75px;height:23px;background:#bfe8fb"></div>
<div class="abs" style="left:361px;top:256px;width:80px;height:23px;background:#6ccef8"></div>
<div class="abs" style="left:441px;top:256px;width:75px;height:23px;background:#ffffff"></div>
<div class="abs" style="left:516px;top:256px;width:75px;height:23px;background:#ffffff"></div>
<div class="abs" style="left:591px;top:256px;width:75px;height:23px;background:#ffffff"></div>
<div class="abs" style="left:93px;top:279px;width:573px;height:1px;background:#d9d9d9"></div>
<div class="abs" style="left:2px;top:279px;width:91px;height:1px;background:#ffffff"></div>
<div class="abs" style="left:93px;top:256px;width:1px;height:23px;background:#d9d9d9"></div>
<div class="abs" style="left:211px;top:256px;width:1px;height:23px;background:#d9d9d9"></div>
<div class="abs" style="left:286px;top:256px;width:1px;height:23px;background:#d9d9d9"></div>
<div class="abs" style="left:361px;top:256px;width:1px;height:23px;background:#d9d9d9"></div>
<div class="abs" style="left:441px;top:256px;width:1px;height:23px;background:#d9d9d9"></div>
<div class="abs" style="left:516px;top:256px;width:1px;height:23px;background:#d9d9d9"></div>
<div class="abs" style="left:591px;top:256px;width:1px;height:23px;background:#d9d9d9"></div>
<div class="abs" style="left:666px;top:256px;width:1px;height:23px;background:#d9d9d9"></div>
<svg class="abs" style="left:238px;top:256px" width="23" height="23"><rect width="23" height="23" fill="url(#tg)"/></svg>
<svg class="abs" style="left:5px;top:257px" width="22" height="22"><use href="#circ"/></svg>
<svg class="abs" style="left:26px;top:260px;color:#2474a6" width="16" height="16"><use href="#docic"/></svg>
<div class="tx" style="left:0px;width:58px;text-align:right;top:261px;font-size:12px;font-weight:bold;letter-spacing:0.5px;color:#000;margin-right:0.5px;">5</div>
<div class="abs" style="left:60px;top:260px;width:1px;height:16px;background:#505050"></div>
<div class="tx" style="left:62px;top:261px;font-size:12px;font-weight:bold;letter-spacing:0.3px;color:#000;">17</div>
<div class="tx" style="left:94px;top:261px;font-size:12px;letter-spacing:-0.67px;color:#000;">1015.17</div>
<svg class="abs" style="left:313px;top:260px" width="22" height="15"><use href="#flag"/></svg>
<div class="tx" style="left:361px;top:261px;font-size:12px;letter-spacing:-0.67px;color:#000;">2042573</div>
<div class="tx" style="left:441px;width:76px;text-align:center;top:261px;font-size:12px;letter-spacing:-0.5px;color:#000;padding-left:-0.5px;">17.0</div>
<div class="tx" style="left:516px;width:76px;text-align:center;top:261px;font-size:12px;letter-spacing:-0.5px;color:#000;padding-left:-0.5px;">1.0</div>
<div class="tx" style="left:591px;width:49px;text-align:right;top:261px;font-size:12px;letter-spacing:-0.67px;color:#000;margin-right:-0.67px;">100.000</div>
<div class="abs" style="left:2px;top:280px;width:91px;height:23px;background:#ffffff"></div>
<div class="abs" style="left:93px;top:280px;width:118px;height:23px;background:#e4c4a5"></div>
<div class="abs" style="left:211px;top:280px;width:75px;height:23px;background:#e4c4a5"></div>
<div class="abs" style="left:286px;top:280px;width:75px;height:23px;background:#acd5ea"></div>
<div class="abs" style="left:361px;top:280px;width:80px;height:23px;background:#63bde9"></div>
<div class="abs" style="left:441px;top:280px;width:75px;height:23px;background:#f3f3f3"></div>
<div class="abs" style="left:516px;top:280px;width:75px;height:23px;background:#f3f3f3"></div>
<div class="abs" style="left:591px;top:280px;width:75px;height:23px;background:#f3f3f3"></div>
<div class="abs" style="left:93px;top:303px;width:573px;height:1px;background:#d9d9d9"></div>
<div class="abs" style="left:2px;top:303px;width:91px;height:1px;background:#ffffff"></div>
<div class="abs" style="left:93px;top:280px;width:1px;height:23px;background:#d9d9d9"></div>
<div class="abs" style="left:211px;top:280px;width:1px;height:23px;background:#d9d9d9"></div>
<div class="abs" style="left:286px;top:280px;width:1px;height:23px;background:#d9d9d9"></div>
<div class="abs" style="left:361px;top:280px;width:1px;height:23px;background:#d9d9d9"></div>
<div class="abs" style="left:441px;top:280px;width:1px;height:23px;background:#d9d9d9"></div>
<div class="abs" style="left:516px;top:280px;width:1px;height:23px;background:#d9d9d9"></div>
<div class="abs" style="left:591px;top:280px;width:1px;height:23px;background:#d9d9d9"></div>
<div class="abs" style="left:666px;top:280px;width:1px;height:23px;background:#d9d9d9"></div>
<svg class="abs" style="left:238px;top:280px" width="23" height="23"><rect width="23" height="23" fill="url(#tg)"/></svg>
<svg class="abs" style="left:5px;top:281px" width="22" height="22"><use href="#circ"/></svg>
<div class="tx" style="left:0px;width:58px;text-align:right;top:285px;font-size:12px;font-weight:bold;letter-spacing:0.5px;color:#000;margin-right:0.5px;">6</div>
<div class="abs" style="left:60px;top:284px;width:1px;height:16px;background:#505050"></div>
<div class="tx" style="left:62px;top:285px;font-size:12px;font-weight:bold;letter-spacing:0.3px;color:#000;">18</div>
<div class="tx" style="left:94px;top:285px;font-size:12px;letter-spacing:-0.67px;color:#000;">1015.1</div>
<svg class="abs" style="left:313px;top:284px" width="22" height="15"><use href="#flag"/></svg>
<div class="tx" style="left:361px;top:285px;font-size:12px;letter-spacing:-0.67px;color:#000;">2443129</div>
<div class="tx" style="left:441px;width:76px;text-align:center;top:285px;font-size:12px;letter-spacing:-0.5px;color:#000;padding-left:-0.5px;">18.0</div>
<div class="tx" style="left:516px;width:76px;text-align:center;top:285px;font-size:12px;letter-spacing:-0.5px;color:#000;padding-left:-0.5px;">1.0</div>
<div class="tx" style="left:591px;width:49px;text-align:right;top:285px;font-size:12px;letter-spacing:-0.67px;color:#000;margin-right:-0.67px;">100.000</div>
<div class="abs" style="left:2px;top:304px;width:91px;height:23px;background:#ffffff"></div>
<div class="abs" style="left:93px;top:304px;width:118px;height:23px;background:#fdd6b1"></div>
<div class="abs" style="left:211px;top:304px;width:75px;height:23px;background:#fdd6b1"></div>
<div class="abs" style="left:286px;top:304px;width:75px;height:23px;background:#bfe8fb"></div>
<div class="abs" style="left:361px;top:304px;width:80px;height:23px;background:#6ccef8"></div>
<div class="abs" style="left:441px;top:304px;width:75px;height:23px;background:#ffffff"></div>
<div class="abs" style="left:516px;top:304px;width:75px;height:23px;background:#ffffff"></div>
<div class="abs" style="left:591px;top:304px;width:75px;height:23px;background:#ffffff"></div>
<div class="abs" style="left:93px;top:327px;width:573px;height:1px;background:#d9d9d9"></div>
<div class="abs" style="left:2px;top:327px;width:91px;height:1px;background:#ffffff"></div>
<div class="abs" style="left:93px;top:304px;width:1px;height:23px;background:#d9d9d9"></div>
<div class="abs" style="left:211px;top:304px;width:1px;height:23px;background:#d9d9d9"></div>
<div class="abs" style="left:286px;top:304px;width:1px;height:23px;background:#d9d9d9"></div>
<div class="abs" style="left:361px;top:304px;width:1px;height:23px;background:#d9d9d9"></div>
<div class="abs" style="left:441px;top:304px;width:1px;height:23px;background:#d9d9d9"></div>
<div class="abs" style="left:516px;top:304px;width:1px;height:23px;background:#d9d9d9"></div>
<div class="abs" style="left:591px;top:304px;width:1px;height:23px;background:#d9d9d9"></div>
<div class="abs" style="left:666px;top:304px;width:1px;height:23px;background:#d9d9d9"></div>
<svg class="abs" style="left:238px;top:304px" width="23" height="23"><rect width="23" height="23" fill="url(#tg)"/></svg>
<svg class="abs" style="left:5px;top:305px" width="22" height="22"><use href="#circ"/></svg>
<div class="tx" style="left:0px;width:58px;text-align:right;top:309px;font-size:12px;font-weight:bold;letter-spacing:0.5px;color:#000;margin-right:0.5px;">7</div>
<div class="abs" style="left:60px;top:308px;width:1px;height:16px;background:#505050"></div>
<div class="tx" style="left:62px;top:309px;font-size:12px;font-weight:bold;letter-spacing:0.3px;color:#000;">20.5</div>
<div class="tx" style="left:94px;top:309px;font-size:12px;letter-spacing:-0.67px;color:#000;">1015.2</div>
<svg class="abs" style="left:313px;top:308px" width="22" height="15"><use href="#flag"/></svg>
<div class="tx" style="left:361px;top:309px;font-size:12px;letter-spacing:-0.67px;color:#000;">2245979</div>
<div class="tx" style="left:441px;width:76px;text-align:center;top:309px;font-size:12px;letter-spacing:-0.5px;color:#000;padding-left:-0.5px;">20.5</div>
<div class="tx" style="left:516px;width:76px;text-align:center;top:309px;font-size:12px;letter-spacing:-0.5px;color:#000;padding-left:-0.5px;">1.5</div>
<div class="tx" style="left:591px;width:49px;text-align:right;top:309px;font-size:12px;letter-spacing:-0.67px;color:#000;margin-right:-0.67px;">100.000</div>
<div class="abs" style="left:2px;top:328px;width:91px;height:23px;background:#ffffff"></div>
<div class="abs" style="left:93px;top:328px;width:118px;height:23px;background:#e4c4a5"></div>
<div class="abs" style="left:211px;top:328px;width:75px;height:23px;background:#e4c4a5"></div>
<div class="abs" style="left:286px;top:328px;width:75px;height:23px;background:#acd5ea"></div>
<div class="abs" style="left:361px;top:328px;width:80px;height:23px;background:#63bde9"></div>
<div class="abs" style="left:441px;top:328px;width:75px;height:23px;background:#f3f3f3"></div>
<div class="abs" style="left:516px;top:328px;width:75px;height:23px;background:#f3f3f3"></div>
<div class="abs" style="left:591px;top:328px;width:75px;height:23px;background:#f3f3f3"></div>
<div class="abs" style="left:93px;top:351px;width:573px;height:1px;background:#d9d9d9"></div>
<div class="abs" style="left:2px;top:351px;width:91px;height:1px;background:#ffffff"></div>
<div class="abs" style="left:93px;top:328px;width:1px;height:23px;background:#d9d9d9"></div>
<div class="abs" style="left:211px;top:328px;width:1px;height:23px;background:#d9d9d9"></div>
<div class="abs" style="left:286px;top:328px;width:1px;height:23px;background:#d9d9d9"></div>
<div class="abs" style="left:361px;top:328px;width:1px;height:23px;background:#d9d9d9"></div>
<div class="abs" style="left:441px;top:328px;width:1px;height:23px;background:#d9d9d9"></div>
<div class="abs" style="left:516px;top:328px;width:1px;height:23px;background:#d9d9d9"></div>
<div class="abs" style="left:591px;top:328px;width:1px;height:23px;background:#d9d9d9"></div>
<div class="abs" style="left:666px;top:328px;width:1px;height:23px;background:#d9d9d9"></div>
<svg class="abs" style="left:238px;top:328px" width="23" height="23"><rect width="23" height="23" fill="url(#tg)"/></svg>
<svg class="abs" style="left:5px;top:329px" width="22" height="22"><use href="#circ"/></svg>
<div class="tx" style="left:0px;width:58px;text-align:right;top:333px;font-size:12px;font-weight:bold;letter-spacing:0.5px;color:#000;margin-right:0.5px;">9</div>
<div class="abs" style="left:60px;top:332px;width:1px;height:16px;background:#505050"></div>
<div class="tx" style="left:62px;top:333px;font-size:12px;font-weight:bold;letter-spacing:0.3px;color:#000;">25.5</div>
<div class="tx" style="left:94px;top:333px;font-size:12px;letter-spacing:-0.67px;color:#000;">1015.5</div>
<svg class="abs" style="left:313px;top:332px" width="22" height="15"><use href="#flag"/></svg>
<div class="tx" style="left:361px;top:333px;font-size:12px;letter-spacing:-0.67px;color:#000;">2484054</div>
<div class="tx" style="left:441px;width:76px;text-align:center;top:333px;font-size:12px;letter-spacing:-0.5px;color:#000;padding-left:-0.5px;">25.5</div>
<div class="tx" style="left:516px;width:76px;text-align:center;top:333px;font-size:12px;letter-spacing:-0.5px;color:#000;padding-left:-0.5px;">1.5</div>
<div class="tx" style="left:591px;width:49px;text-align:right;top:333px;font-size:12px;letter-spacing:-0.67px;color:#000;margin-right:-0.67px;">100.000</div>
<div class="abs" style="left:2px;top:352px;width:91px;height:23px;background:#ffffff"></div>
<div class="abs" style="left:93px;top:352px;width:118px;height:23px;background:#fdd6b1"></div>
<div class="abs" style="left:211px;top:352px;width:75px;height:23px;background:#fdd6b1"></div>
<div class="abs" style="left:286px;top:352px;width:75px;height:23px;background:#bfe8fb"></div>
<div class="abs" style="left:361px;top:352px;width:80px;height:23px;background:#6ccef8"></div>
<div class="abs" style="left:441px;top:352px;width:75px;height:23px;background:#ffffff"></div>
<div class="abs" style="left:516px;top:352px;width:75px;height:23px;background:#ffffff"></div>
<div class="abs" style="left:591px;top:352px;width:75px;height:23px;background:#ffffff"></div>
<div class="abs" style="left:93px;top:375px;width:573px;height:1px;background:#d9d9d9"></div>
<div class="abs" style="left:2px;top:375px;width:91px;height:1px;background:#ffffff"></div>
<div class="abs" style="left:93px;top:352px;width:1px;height:23px;background:#d9d9d9"></div>
<div class="abs" style="left:211px;top:352px;width:1px;height:23px;background:#d9d9d9"></div>
<div class="abs" style="left:286px;top:352px;width:1px;height:23px;background:#d9d9d9"></div>
<div class="abs" style="left:361px;top:352px;width:1px;height:23px;background:#d9d9d9"></div>
<div class="abs" style="left:441px;top:352px;width:1px;height:23px;background:#d9d9d9"></div>
<div class="abs" style="left:516px;top:352px;width:1px;height:23px;background:#d9d9d9"></div>
<div class="abs" style="left:591px;top:352px;width:1px;height:23px;background:#d9d9d9"></div>
<div class="abs" style="left:666px;top:352px;width:1px;height:23px;background:#d9d9d9"></div>
<svg class="abs" style="left:238px;top:352px" width="23" height="23"><rect width="23" height="23" fill="url(#tg)"/></svg>
<svg class="abs" style="left:5px;top:353px" width="22" height="22"><use href="#circ"/></svg>
<div class="tx" style="left:0px;width:58px;text-align:right;top:357px;font-size:12px;font-weight:bold;letter-spacing:0.5px;color:#000;margin-right:0.5px;">10</div>
<div class="abs" style="left:60px;top:356px;width:1px;height:16px;background:#505050"></div>
<div class="tx" style="left:62px;top:357px;font-size:12px;font-weight:bold;letter-spacing:0.3px;color:#000;">28.5</div>
<div class="tx" style="left:94px;top:357px;font-size:12px;letter-spacing:-0.67px;color:#000;">1015.6</div>
<svg class="abs" style="left:313px;top:356px" width="22" height="15"><use href="#flag"/></svg>
<div class="tx" style="left:361px;top:357px;font-size:12px;letter-spacing:-0.67px;color:#000;">2428907</div>
<div class="tx" style="left:441px;width:76px;text-align:center;top:357px;font-size:12px;letter-spacing:-0.5px;color:#000;padding-left:-0.5px;">28.5</div>
<div class="tx" style="left:516px;width:76px;text-align:center;top:357px;font-size:12px;letter-spacing:-0.5px;color:#000;padding-left:-0.5px;">1.5</div>
<div class="tx" style="left:591px;width:49px;text-align:right;top:357px;font-size:12px;letter-spacing:-0.67px;color:#000;margin-right:-0.67px;">100.000</div>
<div class="abs" style="left:2px;top:376px;width:91px;height:23px;background:#ffffff"></div>
<div class="abs" style="left:93px;top:376px;width:118px;height:23px;background:#e4c4a5"></div>
<div class="abs" style="left:211px;top:376px;width:75px;height:23px;background:#e4c4a5"></div>
<div class="abs" style="left:286px;top:376px;width:75px;height:23px;background:#acd5ea"></div>
<div class="abs" style="left:361px;top:376px;width:80px;height:23px;background:#63bde9"></div>
<div class="abs" style="left:441px;top:376px;width:75px;height:23px;background:#f3f3f3"></div>
<div class="abs" style="left:516px;top:376px;width:75px;height:23px;background:#f3f3f3"></div>
<div class="abs" style="left:591px;top:376px;width:75px;height:23px;background:#f3f3f3"></div>
<div class="abs" style="left:93px;top:399px;width:573px;height:1px;background:#d9d9d9"></div>
<div class="abs" style="left:2px;top:399px;width:91px;height:1px;background:#ffffff"></div>
<div class="abs" style="left:93px;top:376px;width:1px;height:23px;background:#d9d9d9"></div>
<div class="abs" style="left:211px;top:376px;width:1px;height:23px;background:#d9d9d9"></div>
<div class="abs" style="left:286px;top:376px;width:1px;height:23px;background:#d9d9d9"></div>
<div class="abs" style="left:361px;top:376px;width:1px;height:23px;background:#d9d9d9"></div>
<div class="abs" style="left:441px;top:376px;width:1px;height:23px;background:#d9d9d9"></div>
<div class="abs" style="left:516px;top:376px;width:1px;height:23px;background:#d9d9d9"></div>
<div class="abs" style="left:591px;top:376px;width:1px;height:23px;background:#d9d9d9"></div>
<div class="abs" style="left:666px;top:376px;width:1px;height:23px;background:#d9d9d9"></div>
<svg class="abs" style="left:238px;top:376px" width="23" height="23"><rect width="23" height="23" fill="url(#tb)"/></svg>
<svg class="abs" style="left:5px;top:377px" width="22" height="22"><use href="#circ"/></svg>
<div class="tx" style="left:0px;width:58px;text-align:right;top:381px;font-size:12px;font-weight:bold;letter-spacing:0.5px;color:#000;margin-right:0.5px;">11</div>
<div class="abs" style="left:60px;top:380px;width:1px;height:16px;background:#505050"></div>
<div class="tx" style="left:62px;top:381px;font-size:12px;font-weight:bold;letter-spacing:0.3px;color:#000;">31.5</div>
<div class="tx" style="left:94px;top:381px;font-size:12px;letter-spacing:-0.67px;color:#000;">1015.7</div>
<svg class="abs" style="left:313px;top:380px" width="22" height="15"><use href="#flag"/></svg>
<div class="tx" style="left:361px;top:381px;font-size:12px;letter-spacing:-0.67px;color:#000;">2619282</div>
<div class="tx" style="left:441px;width:76px;text-align:center;top:381px;font-size:12px;letter-spacing:-0.5px;color:#000;padding-left:-0.5px;">31.5</div>
<div class="tx" style="left:516px;width:76px;text-align:center;top:381px;font-size:12px;letter-spacing:-0.5px;color:#000;padding-left:-0.5px;">2.0</div>
<div class="tx" style="left:591px;width:49px;text-align:right;top:381px;font-size:12px;letter-spacing:-0.67px;color:#000;margin-right:-0.67px;">100.000</div>
<div class="abs" style="left:2px;top:400px;width:91px;height:23px;background:#ffffff"></div>
<div class="abs" style="left:93px;top:400px;width:118px;height:23px;background:#fdd6b1"></div>
<div class="abs" style="left:211px;top:400px;width:75px;height:23px;background:#fdd6b1"></div>
<div class="abs" style="left:286px;top:400px;width:75px;height:23px;background:#bfe8fb"></div>
<div class="abs" style="left:361px;top:400px;width:80px;height:23px;background:#6ccef8"></div>
<div class="abs" style="left:441px;top:400px;width:75px;height:23px;background:#ffffff"></div>
<div class="abs" style="left:516px;top:400px;width:75px;height:23px;background:#ffffff"></div>
<div class="abs" style="left:591px;top:400px;width:75px;height:23px;background:#ffffff"></div>
<div class="abs" style="left:93px;top:423px;width:573px;height:1px;background:#d9d9d9"></div>
<div class="abs" style="left:2px;top:423px;width:91px;height:1px;background:#ffffff"></div>
<div class="abs" style="left:93px;top:400px;width:1px;height:23px;background:#d9d9d9"></div>
<div class="abs" style="left:211px;top:400px;width:1px;height:23px;background:#d9d9d9"></div>
<div class="abs" style="left:286px;top:400px;width:1px;height:23px;background:#d9d9d9"></div>
<div class="abs" style="left:361px;top:400px;width:1px;height:23px;background:#d9d9d9"></div>
<div class="abs" style="left:441px;top:400px;width:1px;height:23px;background:#d9d9d9"></div>
<div class="abs" style="left:516px;top:400px;width:1px;height:23px;background:#d9d9d9"></div>
<div class="abs" style="left:591px;top:400px;width:1px;height:23px;background:#d9d9d9"></div>
<div class="abs" style="left:666px;top:400px;width:1px;height:23px;background:#d9d9d9"></div>
<svg class="abs" style="left:238px;top:400px" width="23" height="23"><rect width="23" height="23" fill="url(#tg)"/></svg>
<svg class="abs" style="left:5px;top:401px" width="22" height="22"><use href="#circ"/></svg>
<div class="tx" style="left:0px;width:58px;text-align:right;top:405px;font-size:12px;font-weight:bold;letter-spacing:0.5px;color:#000;margin-right:0.5px;">12</div>
<div class="abs" style="left:60px;top:404px;width:1px;height:16px;background:#505050"></div>
<div class="tx" style="left:62px;top:405px;font-size:12px;font-weight:bold;letter-spacing:0.3px;color:#000;">33.5</div>
<div class="tx" style="left:94px;top:405px;font-size:12px;letter-spacing:-0.67px;color:#000;">1015.8</div>
<svg class="abs" style="left:313px;top:404px" width="22" height="15"><use href="#flag"/></svg>
<div class="tx" style="left:361px;top:405px;font-size:12px;letter-spacing:-0.67px;color:#000;">2576342</div>
<div class="tx" style="left:441px;width:76px;text-align:center;top:405px;font-size:12px;letter-spacing:-0.5px;color:#000;padding-left:-0.5px;">33.5</div>
<div class="tx" style="left:516px;width:76px;text-align:center;top:405px;font-size:12px;letter-spacing:-0.5px;color:#000;padding-left:-0.5px;">2.0</div>
<div class="tx" style="left:591px;width:49px;text-align:right;top:405px;font-size:12px;letter-spacing:-0.67px;color:#000;margin-right:-0.67px;">100.000</div>
<div class="abs" style="left:2px;top:424px;width:91px;height:23px;background:#ffffff"></div>
<div class="abs" style="left:93px;top:424px;width:118px;height:23px;background:#e4c4a5"></div>
<div class="abs" style="left:211px;top:424px;width:75px;height:23px;background:#e4c4a5"></div>
<div class="abs" style="left:286px;top:424px;width:75px;height:23px;background:#acd5ea"></div>
<div class="abs" style="left:361px;top:424px;width:80px;height:23px;background:#63bde9"></div>
<div class="abs" style="left:441px;top:424px;width:75px;height:23px;background:#f3f3f3"></div>
<div class="abs" style="left:516px;top:424px;width:75px;height:23px;background:#f3f3f3"></div>
<div class="abs" style="left:591px;top:424px;width:75px;height:23px;background:#f3f3f3"></div>
<div class="abs" style="left:93px;top:447px;width:573px;height:1px;background:#d9d9d9"></div>
<div class="abs" style="left:2px;top:447px;width:91px;height:1px;background:#ffffff"></div>
<div class="abs" style="left:93px;top:424px;width:1px;height:23px;background:#d9d9d9"></div>
<div class="abs" style="left:211px;top:424px;width:1px;height:23px;background:#d9d9d9"></div>
<div class="abs" style="left:286px;top:424px;width:1px;height:23px;background:#d9d9d9"></div>
<div class="abs" style="left:361px;top:424px;width:1px;height:23px;background:#d9d9d9"></div>
<div class="abs" style="left:441px;top:424px;width:1px;height:23px;background:#d9d9d9"></div>
<div class="abs" style="left:516px;top:424px;width:1px;height:23px;background:#d9d9d9"></div>
<div class="abs" style="left:591px;top:424px;width:1px;height:23px;background:#d9d9d9"></div>
<div class="abs" style="left:666px;top:424px;width:1px;height:23px;background:#d9d9d9"></div>
<svg class="abs" style="left:238px;top:424px" width="23" height="23"><rect width="23" height="23" fill="url(#tg)"/></svg>
<svg class="abs" style="left:5px;top:425px" width="22" height="22"><use href="#circ"/></svg>
<div class="tx" style="left:0px;width:58px;text-align:right;top:429px;font-size:12px;font-weight:bold;letter-spacing:0.5px;color:#000;margin-right:0.5px;">13</div>
<div class="abs" style="left:60px;top:428px;width:1px;height:16px;background:#505050"></div>
<div class="tx" style="left:62px;top:429px;font-size:12px;font-weight:bold;letter-spacing:0.3px;color:#000;">37.5</div>
<div class="tx" style="left:94px;top:429px;font-size:12px;letter-spacing:-0.67px;color:#000;">1015.9</div>
<svg class="abs" style="left:313px;top:428px" width="22" height="15"><use href="#flag"/></svg>
<div class="tx" style="left:361px;top:429px;font-size:12px;letter-spacing:-0.67px;color:#000;">2811548</div>
<div class="tx" style="left:441px;width:76px;text-align:center;top:429px;font-size:12px;letter-spacing:-0.5px;color:#000;padding-left:-0.5px;">37.5</div>
<div class="tx" style="left:516px;width:76px;text-align:center;top:429px;font-size:12px;letter-spacing:-0.5px;color:#000;padding-left:-0.5px;">2.0</div>
<div class="tx" style="left:591px;width:49px;text-align:right;top:429px;font-size:12px;letter-spacing:-0.67px;color:#000;margin-right:-0.67px;">100.000</div>
<div class="abs" style="left:2px;top:448px;width:91px;height:23px;background:#a2a2a9"></div>
<div class="abs" style="left:93px;top:448px;width:118px;height:23px;background:#fdd6b1"></div>
<div class="abs" style="left:211px;top:448px;width:75px;height:23px;background:#fdd6b1"></div>
<div class="abs" style="left:286px;top:448px;width:75px;height:23px;background:#bfe8fb"></div>
<div class="abs" style="left:361px;top:448px;width:80px;height:23px;background:#6ccef8"></div>
<div class="abs" style="left:441px;top:448px;width:75px;height:23px;background:#ffffff"></div>
<div class="abs" style="left:516px;top:448px;width:75px;height:23px;background:#ffffff"></div>
<div class="abs" style="left:591px;top:448px;width:75px;height:23px;background:#ffffff"></div>
<div class="abs" style="left:93px;top:471px;width:573px;height:1px;background:#d9d9d9"></div>
<div class="abs" style="left:2px;top:471px;width:91px;height:1px;background:#ffffff"></div>
<div class="abs" style="left:93px;top:448px;width:1px;height:23px;background:#d9d9d9"></div>
<div class="abs" style="left:211px;top:448px;width:1px;height:23px;background:#d9d9d9"></div>
<div class="abs" style="left:286px;top:448px;width:1px;height:23px;background:#d9d9d9"></div>
<div class="abs" style="left:361px;top:448px;width:1px;height:23px;background:#d9d9d9"></div>
<div class="abs" style="left:441px;top:448px;width:1px;height:23px;background:#d9d9d9"></div>
<div class="abs" style="left:516px;top:448px;width:1px;height:23px;background:#d9d9d9"></div>
<div class="abs" style="left:591px;top:448px;width:1px;height:23px;background:#d9d9d9"></div>
<div class="abs" style="left:666px;top:448px;width:1px;height:23px;background:#d9d9d9"></div>
<svg class="abs" style="left:238px;top:448px" width="23" height="23"><rect width="23" height="23" fill="url(#tg)"/></svg>
<svg class="abs" style="left:5px;top:449px" width="22" height="22"><use href="#circ"/></svg>
<svg class="abs" style="left:26px;top:452px;color:#2474a6" width="16" height="16"><use href="#docic"/></svg>
<div class="tx" style="left:0px;width:58px;text-align:right;top:453px;font-size:12px;font-weight:bold;letter-spacing:0.5px;color:#000;margin-right:0.5px;">14</div>
<div class="abs" style="left:60px;top:452px;width:1px;height:16px;background:#505050"></div>
<div class="tx" style="left:62px;top:453px;font-size:12px;font-weight:bold;letter-spacing:0.3px;color:#000;">39.5</div>
<div class="tx" style="left:94px;top:453px;font-size:12px;letter-spacing:-0.67px;color:#000;">1015.10</div>
<svg class="abs" style="left:313px;top:452px" width="22" height="15"><use href="#flag"/></svg>
<div class="tx" style="left:361px;top:453px;font-size:12px;letter-spacing:-0.67px;color:#000;">2640278</div>
<div class="tx" style="left:441px;width:76px;text-align:center;top:453px;font-size:12px;letter-spacing:-0.5px;color:#000;padding-left:-0.5px;">39.5</div>
<div class="tx" style="left:516px;width:76px;text-align:center;top:453px;font-size:12px;letter-spacing:-0.5px;color:#000;padding-left:-0.5px;">2.0</div>
<div class="tx" style="left:591px;width:49px;text-align:right;top:453px;font-size:12px;letter-spacing:-0.67px;color:#000;margin-right:-0.67px;">100.000</div>
<div class="abs" style="left:2px;top:472px;width:91px;height:23px;background:#ffffff"></div>
<div class="abs" style="left:93px;top:472px;width:118px;height:23px;background:#e4c4a5"></div>
<div class="abs" style="left:211px;top:472px;width:75px;height:23px;background:#e4c4a5"></div>
<div class="abs" style="left:286px;top:472px;width:75px;height:23px;background:#acd5ea"></div>
<div class="abs" style="left:361px;top:472px;width:80px;height:23px;background:#63bde9"></div>
<div class="abs" style="left:441px;top:472px;width:75px;height:23px;background:#f3f3f3"></div>
<div class="abs" style="left:516px;top:472px;width:75px;height:23px;background:#f3f3f3"></div>
<div class="abs" style="left:591px;top:472px;width:75px;height:23px;background:#f3f3f3"></div>
<div class="abs" style="left:93px;top:495px;width:573px;height:1px;background:#d9d9d9"></div>
<div class="abs" style="left:2px;top:495px;width:91px;height:1px;background:#ffffff"></div>
<div class="abs" style="left:93px;top:472px;width:1px;height:23px;background:#d9d9d9"></div>
<div class="abs" style="left:211px;top:472px;width:1px;height:23px;background:#d9d9d9"></div>
<div class="abs" style="left:286px;top:472px;width:1px;height:23px;background:#d9d9d9"></div>
<div class="abs" style="left:361px;top:472px;width:1px;height:23px;background:#d9d9d9"></div>
<div class="abs" style="left:441px;top:472px;width:1px;height:23px;background:#d9d9d9"></div>
<div class="abs" style="left:516px;top:472px;width:1px;height:23px;background:#d9d9d9"></div>
<div class="abs" style="left:591px;top:472px;width:1px;height:23px;background:#d9d9d9"></div>
<div class="abs" style="left:666px;top:472px;width:1px;height:23px;background:#d9d9d9"></div>
<svg class="abs" style="left:238px;top:472px" width="23" height="23"><rect width="23" height="23" fill="url(#tg)"/></svg>
<svg class="abs" style="left:5px;top:473px" width="22" height="22"><use href="#circ"/></svg>
<div class="tx" style="left:0px;width:58px;text-align:right;top:477px;font-size:12px;font-weight:bold;letter-spacing:0.5px;color:#000;margin-right:0.5px;">15</div>
<div class="abs" style="left:60px;top:476px;width:1px;height:16px;background:#505050"></div>
<div class="tx" style="left:62px;top:477px;font-size:12px;font-weight:bold;letter-spacing:0.3px;color:#000;">42.5</div>
<div class="tx" style="left:94px;top:477px;font-size:12px;letter-spacing:-0.67px;color:#000;">1015.11</div>
<svg class="abs" style="left:313px;top:476px" width="22" height="15"><use href="#flag"/></svg>
<div class="tx" style="left:361px;top:477px;font-size:12px;letter-spacing:-0.67px;color:#000;">2224281</div>
<div class="tx" style="left:441px;width:76px;text-align:center;top:477px;font-size:12px;letter-spacing:-0.5px;color:#000;padding-left:-0.5px;">42.5</div>
<div class="tx" style="left:516px;width:76px;text-align:center;top:477px;font-size:12px;letter-spacing:-0.5px;color:#000;padding-left:-0.5px;">2.0</div>
<div class="tx" style="left:591px;width:49px;text-align:right;top:477px;font-size:12px;letter-spacing:-0.67px;color:#000;margin-right:-0.67px;">100.000</div>
<div class="abs" style="left:2px;top:496px;width:91px;height:23px;background:#ffffff"></div>
<div class="abs" style="left:93px;top:496px;width:118px;height:23px;background:#fdd6b1"></div>
<div class="abs" style="left:211px;top:496px;width:75px;height:23px;background:#fdd6b1"></div>
<div class="abs" style="left:286px;top:496px;width:75px;height:23px;background:#bfe8fb"></div>
<div class="abs" style="left:361px;top:496px;width:80px;height:23px;background:#6ccef8"></div>
<div class="abs" style="left:441px;top:496px;width:75px;height:23px;background:#ffffff"></div>
<div class="abs" style="left:516px;top:496px;width:75px;height:23px;background:#ffffff"></div>
<div class="abs" style="left:591px;top:496px;width:75px;height:23px;background:#ffffff"></div>
<div class="abs" style="left:93px;top:519px;width:573px;height:1px;background:#d9d9d9"></div>
<div class="abs" style="left:2px;top:519px;width:91px;height:1px;background:#ffffff"></div>
<div class="abs" style="left:93px;top:496px;width:1px;height:23px;background:#d9d9d9"></div>
<div class="abs" style="left:211px;top:496px;width:1px;height:23px;background:#d9d9d9"></div>
<div class="abs" style="left:286px;top:496px;width:1px;height:23px;background:#d9d9d9"></div>
<div class="abs" style="left:361px;top:496px;width:1px;height:23px;background:#d9d9d9"></div>
<div class="abs" style="left:441px;top:496px;width:1px;height:23px;background:#d9d9d9"></div>
<div class="abs" style="left:516px;top:496px;width:1px;height:23px;background:#d9d9d9"></div>
<div class="abs" style="left:591px;top:496px;width:1px;height:23px;background:#d9d9d9"></div>
<div class="abs" style="left:666px;top:496px;width:1px;height:23px;background:#d9d9d9"></div>
<svg class="abs" style="left:238px;top:496px" width="23" height="23"><rect width="23" height="23" fill="url(#tg)"/></svg>
<svg class="abs" style="left:5px;top:497px" width="22" height="22"><use href="#circ"/></svg>
<div class="tx" style="left:0px;width:58px;text-align:right;top:501px;font-size:12px;font-weight:bold;letter-spacing:0.5px;color:#000;margin-right:0.5px;">16</div>
<div class="abs" style="left:60px;top:500px;width:1px;height:16px;background:#505050"></div>
<div class="tx" style="left:62px;top:501px;font-size:12px;font-weight:bold;letter-spacing:0.3px;color:#000;">47.5</div>
<div class="tx" style="left:94px;top:501px;font-size:12px;letter-spacing:-0.67px;color:#000;">1015.12</div>
<svg class="abs" style="left:313px;top:500px" width="22" height="15"><use href="#flag"/></svg>
<div class="tx" style="left:361px;top:501px;font-size:12px;letter-spacing:-0.67px;color:#000;">2529588</div>
<div class="tx" style="left:441px;width:76px;text-align:center;top:501px;font-size:12px;letter-spacing:-0.5px;color:#000;padding-left:-0.5px;">47.5</div>
<div class="tx" style="left:516px;width:76px;text-align:center;top:501px;font-size:12px;letter-spacing:-0.5px;color:#000;padding-left:-0.5px;">2.0</div>
<div class="tx" style="left:591px;width:49px;text-align:right;top:501px;font-size:12px;letter-spacing:-0.67px;color:#000;margin-right:-0.67px;">100.000</div>
<div class="abs" style="left:2px;top:520px;width:91px;height:23px;background:#ffffff"></div>
<div class="abs" style="left:93px;top:520px;width:118px;height:23px;background:#e4c4a5"></div>
<div class="abs" style="left:211px;top:520px;width:75px;height:23px;background:#e4c4a5"></div>
<div class="abs" style="left:286px;top:520px;width:75px;height:23px;background:#acd5ea"></div>
<div class="abs" style="left:361px;top:520px;width:80px;height:23px;background:#63bde9"></div>
<div class="abs" style="left:441px;top:520px;width:75px;height:23px;background:#f3f3f3"></div>
<div class="abs" style="left:516px;top:520px;width:75px;height:23px;background:#f3f3f3"></div>
<div class="abs" style="left:591px;top:520px;width:75px;height:23px;background:#f3f3f3"></div>
<div class="abs" style="left:93px;top:543px;width:573px;height:1px;background:#d9d9d9"></div>
<div class="abs" style="left:2px;top:543px;width:91px;height:1px;background:#ffffff"></div>
<div class="abs" style="left:93px;top:520px;width:1px;height:23px;background:#d9d9d9"></div>
<div class="abs" style="left:211px;top:520px;width:1px;height:23px;background:#d9d9d9"></div>
<div class="abs" style="left:286px;top:520px;width:1px;height:23px;background:#d9d9d9"></div>
<div class="abs" style="left:361px;top:520px;width:1px;height:23px;background:#d9d9d9"></div>
<div class="abs" style="left:441px;top:520px;width:1px;height:23px;background:#d9d9d9"></div>
<div class="abs" style="left:516px;top:520px;width:1px;height:23px;background:#d9d9d9"></div>
<div class="abs" style="left:591px;top:520px;width:1px;height:23px;background:#d9d9d9"></div>
<div class="abs" style="left:666px;top:520px;width:1px;height:23px;background:#d9d9d9"></div>
<svg class="abs" style="left:238px;top:520px" width="23" height="23"><rect width="23" height="23" fill="url(#tg)"/></svg>
<svg class="abs" style="left:5px;top:521px" width="22" height="22"><use href="#circ"/></svg>
<div class="tx" style="left:0px;width:58px;text-align:right;top:525px;font-size:12px;font-weight:bold;letter-spacing:0.5px;color:#000;margin-right:0.5px;">17</div>
<div class="abs" style="left:60px;top:524px;width:1px;height:16px;background:#505050"></div>
<div class="tx" style="left:62px;top:525px;font-size:12px;font-weight:bold;letter-spacing:0.3px;color:#000;">52</div>
<div class="tx" style="left:94px;top:525px;font-size:12px;letter-spacing:-0.67px;color:#000;">1015.13</div>
<svg class="abs" style="left:313px;top:524px" width="22" height="15"><use href="#flag"/></svg>
<div class="tx" style="left:361px;top:525px;font-size:12px;letter-spacing:-0.67px;color:#000;">2191137</div>
<div class="tx" style="left:441px;width:76px;text-align:center;top:525px;font-size:12px;letter-spacing:-0.5px;color:#000;padding-left:-0.5px;">52.0</div>
<div class="tx" style="left:516px;width:76px;text-align:center;top:525px;font-size:12px;letter-spacing:-0.5px;color:#000;padding-left:-0.5px;">2.5</div>
<div class="tx" style="left:591px;width:49px;text-align:right;top:525px;font-size:12px;letter-spacing:-0.67px;color:#000;margin-right:-0.67px;">100.000</div>
<div class="abs" style="left:2px;top:544px;width:91px;height:23px;background:#ffffff"></div>
<div class="abs" style="left:93px;top:544px;width:118px;height:23px;background:#fdd6b1"></div>
<div class="abs" style="left:211px;top:544px;width:75px;height:23px;background:#fdd6b1"></div>
<div class="abs" style="left:286px;top:544px;width:75px;height:23px;background:#bfe8fb"></div>
<div class="abs" style="left:361px;top:544px;width:80px;height:23px;background:#6ccef8"></div>
<div class="abs" style="left:441px;top:544px;width:75px;height:23px;background:#ffffff"></div>
<div class="abs" style="left:516px;top:544px;width:75px;height:23px;background:#ffffff"></div>
<div class="abs" style="left:591px;top:544px;width:75px;height:23px;background:#ffffff"></div>
<div class="abs" style="left:93px;top:567px;width:573px;height:1px;background:#d9d9d9"></div>
<div class="abs" style="left:2px;top:567px;width:91px;height:1px;background:#ffffff"></div>
<div class="abs" style="left:93px;top:544px;width:1px;height:23px;background:#d9d9d9"></div>
<div class="abs" style="left:211px;top:544px;width:1px;height:23px;background:#d9d9d9"></div>
<div class="abs" style="left:286px;top:544px;width:1px;height:23px;background:#d9d9d9"></div>
<div class="abs" style="left:361px;top:544px;width:1px;height:23px;background:#d9d9d9"></div>
<div class="abs" style="left:441px;top:544px;width:1px;height:23px;background:#d9d9d9"></div>
<div class="abs" style="left:516px;top:544px;width:1px;height:23px;background:#d9d9d9"></div>
<div class="abs" style="left:591px;top:544px;width:1px;height:23px;background:#d9d9d9"></div>
<div class="abs" style="left:666px;top:544px;width:1px;height:23px;background:#d9d9d9"></div>
<svg class="abs" style="left:238px;top:544px" width="23" height="23"><rect width="23" height="23" fill="url(#tg)"/></svg>
<svg class="abs" style="left:5px;top:545px" width="22" height="22"><use href="#circ"/></svg>
<div class="tx" style="left:0px;width:58px;text-align:right;top:549px;font-size:12px;font-weight:bold;letter-spacing:0.5px;color:#000;margin-right:0.5px;">18</div>
<div class="abs" style="left:60px;top:548px;width:1px;height:16px;background:#505050"></div>
<div class="tx" style="left:62px;top:549px;font-size:12px;font-weight:bold;letter-spacing:0.3px;color:#000;">57</div>
<div class="tx" style="left:94px;top:549px;font-size:12px;letter-spacing:-0.67px;color:#000;">1015.18</div>
<svg class="abs" style="left:313px;top:548px" width="22" height="15"><use href="#flag"/></svg>
<div class="tx" style="left:361px;top:549px;font-size:12px;letter-spacing:-0.67px;color:#000;">2193762</div>
<div class="tx" style="left:441px;width:76px;text-align:center;top:549px;font-size:12px;letter-spacing:-0.5px;color:#000;padding-left:-0.5px;">57.0</div>
<div class="tx" style="left:516px;width:76px;text-align:center;top:549px;font-size:12px;letter-spacing:-0.5px;color:#000;padding-left:-0.5px;">2.5</div>
<div class="tx" style="left:591px;width:49px;text-align:right;top:549px;font-size:12px;letter-spacing:-0.67px;color:#000;margin-right:-0.67px;">100.000</div>
<div class="abs" style="left:2px;top:568px;width:91px;height:23px;background:#a2a2a9"></div>
<div class="abs" style="left:93px;top:568px;width:118px;height:23px;background:#e4c4a5"></div>
<div class="abs" style="left:211px;top:568px;width:75px;height:23px;background:#e4c4a5"></div>
<div class="abs" style="left:286px;top:568px;width:75px;height:23px;background:#acd5ea"></div>
<div class="abs" style="left:361px;top:568px;width:80px;height:23px;background:#63bde9"></div>
<div class="abs" style="left:441px;top:568px;width:75px;height:23px;background:#f3f3f3"></div>
<div class="abs" style="left:516px;top:568px;width:75px;height:23px;background:#f3f3f3"></div>
<div class="abs" style="left:591px;top:568px;width:75px;height:23px;background:#f3f3f3"></div>
<div class="abs" style="left:93px;top:591px;width:573px;height:1px;background:#d9d9d9"></div>
<div class="abs" style="left:2px;top:591px;width:91px;height:1px;background:#ffffff"></div>
<div class="abs" style="left:93px;top:568px;width:1px;height:23px;background:#d9d9d9"></div>
<div class="abs" style="left:211px;top:568px;width:1px;height:23px;background:#d9d9d9"></div>
<div class="abs" style="left:286px;top:568px;width:1px;height:23px;background:#d9d9d9"></div>
<div class="abs" style="left:361px;top:568px;width:1px;height:23px;background:#d9d9d9"></div>
<div class="abs" style="left:441px;top:568px;width:1px;height:23px;background:#d9d9d9"></div>
<div class="abs" style="left:516px;top:568px;width:1px;height:23px;background:#d9d9d9"></div>
<div class="abs" style="left:591px;top:568px;width:1px;height:23px;background:#d9d9d9"></div>
<div class="abs" style="left:666px;top:568px;width:1px;height:23px;background:#d9d9d9"></div>
<svg class="abs" style="left:238px;top:568px" width="23" height="23"><rect width="23" height="23" fill="url(#tg)"/></svg>
<svg class="abs" style="left:5px;top:569px" width="22" height="22"><use href="#circ"/></svg>
<svg class="abs" style="left:26px;top:572px;color:#2474a6" width="16" height="16"><use href="#docic"/></svg>
<div class="tx" style="left:0px;width:58px;text-align:right;top:573px;font-size:12px;font-weight:bold;letter-spacing:0.5px;color:#000;margin-right:0.5px;">19</div>
<div class="abs" style="left:60px;top:572px;width:1px;height:16px;background:#505050"></div>
<div class="tx" style="left:62px;top:573px;font-size:12px;font-weight:bold;letter-spacing:0.3px;color:#000;">62</div>
<div class="tx" style="left:94px;top:573px;font-size:12px;letter-spacing:-0.67px;color:#000;">1015.19</div>
<svg class="abs" style="left:313px;top:572px" width="22" height="15"><use href="#flag"/></svg>
<div class="tx" style="left:361px;top:573px;font-size:12px;letter-spacing:-0.67px;color:#000;">2574786</div>
<div class="tx" style="left:441px;width:76px;text-align:center;top:573px;font-size:12px;letter-spacing:-0.5px;color:#000;padding-left:-0.5px;">62.0</div>
<div class="tx" style="left:516px;width:76px;text-align:center;top:573px;font-size:12px;letter-spacing:-0.5px;color:#000;padding-left:-0.5px;">2.5</div>
<div class="tx" style="left:591px;width:49px;text-align:right;top:573px;font-size:12px;letter-spacing:-0.67px;color:#000;margin-right:-0.67px;">100.000</div>
<div class="abs" style="left:2px;top:592px;width:91px;height:23px;background:#a2a2a9"></div>
<div class="abs" style="left:93px;top:592px;width:118px;height:23px;background:#fdd6b1"></div>
<div class="abs" style="left:211px;top:592px;width:75px;height:23px;background:#fdd6b1"></div>
<div class="abs" style="left:286px;top:592px;width:75px;height:23px;background:#bfe8fb"></div>
<div class="abs" style="left:361px;top:592px;width:80px;height:23px;background:#6ccef8"></div>
<div class="abs" style="left:441px;top:592px;width:75px;height:23px;background:#ffffff"></div>
<div class="abs" style="left:516px;top:592px;width:75px;height:23px;background:#ffffff"></div>
<div class="abs" style="left:591px;top:592px;width:75px;height:23px;background:#ffffff"></div>
<div class="abs" style="left:93px;top:615px;width:573px;height:1px;background:#d9d9d9"></div>
<div class="abs" style="left:2px;top:615px;width:91px;height:1px;background:#ffffff"></div>
<div class="abs" style="left:93px;top:592px;width:1px;height:23px;background:#d9d9d9"></div>
<div class="abs" style="left:211px;top:592px;width:1px;height:23px;background:#d9d9d9"></div>
<div class="abs" style="left:286px;top:592px;width:1px;height:23px;background:#d9d9d9"></div>
<div class="abs" style="left:361px;top:592px;width:1px;height:23px;background:#d9d9d9"></div>
<div class="abs" style="left:441px;top:592px;width:1px;height:23px;background:#d9d9d9"></div>
<div class="abs" style="left:516px;top:592px;width:1px;height:23px;background:#d9d9d9"></div>
<div class="abs" style="left:591px;top:592px;width:1px;height:23px;background:#d9d9d9"></div>
<div class="abs" style="left:666px;top:592px;width:1px;height:23px;background:#d9d9d9"></div>
<svg class="abs" style="left:238px;top:592px" width="23" height="23"><rect width="23" height="23" fill="url(#tg)"/></svg>
<svg class="abs" style="left:5px;top:593px" width="22" height="22"><use href="#circ"/></svg>
<svg class="abs" style="left:26px;top:596px;color:#2474a6" width="16" height="16"><use href="#docic"/></svg>
<div class="tx" style="left:0px;width:58px;text-align:right;top:597px;font-size:12px;font-weight:bold;letter-spacing:0.5px;color:#000;margin-right:0.5px;">20</div>
<div class="abs" style="left:60px;top:596px;width:1px;height:16px;background:#505050"></div>
<div class="tx" style="left:62px;top:597px;font-size:12px;font-weight:bold;letter-spacing:0.3px;color:#000;">67</div>
<div class="tx" style="left:94px;top:597px;font-size:12px;letter-spacing:-0.67px;color:#000;">1015.20</div>
<svg class="abs" style="left:313px;top:596px" width="22" height="15"><use href="#flag"/></svg>
<div class="tx" style="left:361px;top:597px;font-size:12px;letter-spacing:-0.67px;color:#000;">2336039</div>
<div class="tx" style="left:441px;width:76px;text-align:center;top:597px;font-size:12px;letter-spacing:-0.5px;color:#000;padding-left:-0.5px;">67.0</div>
<div class="tx" style="left:516px;width:76px;text-align:center;top:597px;font-size:12px;letter-spacing:-0.5px;color:#000;padding-left:-0.5px;">2.5</div>
<div class="tx" style="left:591px;width:49px;text-align:right;top:597px;font-size:12px;letter-spacing:-0.67px;color:#000;margin-right:-0.67px;">100.000</div>
<div class="abs" style="left:2px;top:616px;width:91px;height:23px;background:#a2a2a9"></div>
<div class="abs" style="left:93px;top:616px;width:118px;height:23px;background:#e4c4a5"></div>
<div class="abs" style="left:211px;top:616px;width:75px;height:23px;background:#e4c4a5"></div>
<div class="abs" style="left:286px;top:616px;width:75px;height:23px;background:#acd5ea"></div>
<div class="abs" style="left:361px;top:616px;width:80px;height:23px;background:#63bde9"></div>
<div class="abs" style="left:441px;top:616px;width:75px;height:23px;background:#f3f3f3"></div>
<div class="abs" style="left:516px;top:616px;width:75px;height:23px;background:#f3f3f3"></div>
<div class="abs" style="left:591px;top:616px;width:75px;height:23px;background:#f3f3f3"></div>
<div class="abs" style="left:93px;top:639px;width:573px;height:1px;background:#d9d9d9"></div>
<div class="abs" style="left:2px;top:639px;width:91px;height:1px;background:#ffffff"></div>
<div class="abs" style="left:93px;top:616px;width:1px;height:23px;background:#d9d9d9"></div>
<div class="abs" style="left:211px;top:616px;width:1px;height:23px;background:#d9d9d9"></div>
<div class="abs" style="left:286px;top:616px;width:1px;height:23px;background:#d9d9d9"></div>
<div class="abs" style="left:361px;top:616px;width:1px;height:23px;background:#d9d9d9"></div>
<div class="abs" style="left:441px;top:616px;width:1px;height:23px;background:#d9d9d9"></div>
<div class="abs" style="left:516px;top:616px;width:1px;height:23px;background:#d9d9d9"></div>
<div class="abs" style="left:591px;top:616px;width:1px;height:23px;background:#d9d9d9"></div>
<div class="abs" style="left:666px;top:616px;width:1px;height:23px;background:#d9d9d9"></div>
<svg class="abs" style="left:238px;top:616px" width="23" height="23"><rect width="23" height="23" fill="url(#tg)"/></svg>
<svg class="abs" style="left:5px;top:617px" width="22" height="22"><use href="#circ"/></svg>
<svg class="abs" style="left:26px;top:620px;color:#2474a6" width="16" height="16"><use href="#docic"/></svg>
<div class="tx" style="left:0px;width:58px;text-align:right;top:621px;font-size:12px;font-weight:bold;letter-spacing:0.5px;color:#000;margin-right:0.5px;">21</div>
<div class="abs" style="left:60px;top:620px;width:1px;height:16px;background:#505050"></div>
<div class="tx" style="left:62px;top:621px;font-size:12px;font-weight:bold;letter-spacing:0.3px;color:#000;">72</div>
<div class="tx" style="left:94px;top:621px;font-size:12px;letter-spacing:-0.67px;color:#000;">1015.21</div>
<svg class="abs" style="left:313px;top:620px" width="22" height="15"><use href="#flag"/></svg>
<div class="tx" style="left:361px;top:621px;font-size:12px;letter-spacing:-0.67px;color:#000;">2615589</div>
<div class="tx" style="left:441px;width:76px;text-align:center;top:621px;font-size:12px;letter-spacing:-0.5px;color:#000;padding-left:-0.5px;">72.0</div>
<div class="tx" style="left:516px;width:76px;text-align:center;top:621px;font-size:12px;letter-spacing:-0.5px;color:#000;padding-left:-0.5px;">2.5</div>
<div class="tx" style="left:591px;width:49px;text-align:right;top:621px;font-size:12px;letter-spacing:-0.67px;color:#000;margin-right:-0.67px;">100.000</div>
<div class="abs" style="left:2px;top:640px;width:91px;height:23px;background:#a2a2a9"></div>
<div class="abs" style="left:93px;top:640px;width:118px;height:23px;background:#fdd6b1"></div>
<div class="abs" style="left:211px;top:640px;width:75px;height:23px;background:#fdd6b1"></div>
<div class="abs" style="left:286px;top:640px;width:75px;height:23px;background:#bfe8fb"></div>
<div class="abs" style="left:361px;top:640px;width:80px;height:23px;background:#6ccef8"></div>
<div class="abs" style="left:441px;top:640px;width:75px;height:23px;background:#ffffff"></div>
<div class="abs" style="left:516px;top:640px;width:75px;height:23px;background:#ffffff"></div>
<div class="abs" style="left:591px;top:640px;width:75px;height:23px;background:#ffffff"></div>
<div class="abs" style="left:93px;top:663px;width:573px;height:1px;background:#d9d9d9"></div>
<div class="abs" style="left:2px;top:663px;width:91px;height:1px;background:#ffffff"></div>
<div class="abs" style="left:93px;top:640px;width:1px;height:23px;background:#d9d9d9"></div>
<div class="abs" style="left:211px;top:640px;width:1px;height:23px;background:#d9d9d9"></div>
<div class="abs" style="left:286px;top:640px;width:1px;height:23px;background:#d9d9d9"></div>
<div class="abs" style="left:361px;top:640px;width:1px;height:23px;background:#d9d9d9"></div>
<div class="abs" style="left:441px;top:640px;width:1px;height:23px;background:#d9d9d9"></div>
<div class="abs" style="left:516px;top:640px;width:1px;height:23px;background:#d9d9d9"></div>
<div class="abs" style="left:591px;top:640px;width:1px;height:23px;background:#d9d9d9"></div>
<div class="abs" style="left:666px;top:640px;width:1px;height:23px;background:#d9d9d9"></div>
<svg class="abs" style="left:238px;top:640px" width="23" height="23"><rect width="23" height="23" fill="url(#tb)"/></svg>
<svg class="abs" style="left:5px;top:641px" width="22" height="22"><use href="#circ"/></svg>
<svg class="abs" style="left:26px;top:644px;color:#2474a6" width="16" height="16"><use href="#docic"/></svg>
<div class="tx" style="left:0px;width:58px;text-align:right;top:645px;font-size:12px;font-weight:bold;letter-spacing:0.5px;color:#000;margin-right:0.5px;">22</div>
<div class="abs" style="left:60px;top:644px;width:1px;height:16px;background:#505050"></div>
<div class="tx" style="left:62px;top:645px;font-size:12px;font-weight:bold;letter-spacing:0.3px;color:#000;">78</div>
<div class="tx" style="left:94px;top:645px;font-size:12px;letter-spacing:-0.67px;color:#000;">1015.22</div>
<svg class="abs" style="left:313px;top:644px" width="22" height="15"><use href="#flag"/></svg>
<div class="tx" style="left:361px;top:645px;font-size:12px;letter-spacing:-0.67px;color:#000;">2045137</div>
<div class="tx" style="left:441px;width:76px;text-align:center;top:645px;font-size:12px;letter-spacing:-0.5px;color:#000;padding-left:-0.5px;">78.0</div>
<div class="tx" style="left:516px;width:76px;text-align:center;top:645px;font-size:12px;letter-spacing:-0.5px;color:#000;padding-left:-0.5px;">2.5</div>
<div class="tx" style="left:591px;width:49px;text-align:right;top:645px;font-size:12px;letter-spacing:-0.67px;color:#000;margin-right:-0.67px;">100.000</div>
<div class="abs" style="left:2px;top:664px;width:91px;height:23px;background:#a2a2a9"></div>
<div class="abs" style="left:93px;top:664px;width:118px;height:23px;background:#e4c4a5"></div>
<div class="abs" style="left:211px;top:664px;width:75px;height:23px;background:#e4c4a5"></div>
<div class="abs" style="left:286px;top:664px;width:75px;height:23px;background:#acd5ea"></div>
<div class="abs" style="left:361px;top:664px;width:80px;height:23px;background:#63bde9"></div>
<div class="abs" style="left:441px;top:664px;width:75px;height:23px;background:#f3f3f3"></div>
<div class="abs" style="left:516px;top:664px;width:75px;height:23px;background:#f3f3f3"></div>
<div class="abs" style="left:591px;top:664px;width:75px;height:23px;background:#f3f3f3"></div>
<div class="abs" style="left:93px;top:687px;width:573px;height:1px;background:#d9d9d9"></div>
<div class="abs" style="left:2px;top:687px;width:91px;height:1px;background:#ffffff"></div>
<div class="abs" style="left:93px;top:664px;width:1px;height:23px;background:#d9d9d9"></div>
<div class="abs" style="left:211px;top:664px;width:1px;height:23px;background:#d9d9d9"></div>
<div class="abs" style="left:286px;top:664px;width:1px;height:23px;background:#d9d9d9"></div>
<div class="abs" style="left:361px;top:664px;width:1px;height:23px;background:#d9d9d9"></div>
<div class="abs" style="left:441px;top:664px;width:1px;height:23px;background:#d9d9d9"></div>
<div class="abs" style="left:516px;top:664px;width:1px;height:23px;background:#d9d9d9"></div>
<div class="abs" style="left:591px;top:664px;width:1px;height:23px;background:#d9d9d9"></div>
<div class="abs" style="left:666px;top:664px;width:1px;height:23px;background:#d9d9d9"></div>
<svg class="abs" style="left:238px;top:664px" width="23" height="23"><rect width="23" height="23" fill="url(#tp)"/></svg>
<svg class="abs" style="left:5px;top:665px" width="22" height="22"><use href="#circ"/></svg>
<svg class="abs" style="left:26px;top:668px;color:#2474a6" width="16" height="16"><use href="#docic"/></svg>
<div class="tx" style="left:0px;width:58px;text-align:right;top:669px;font-size:12px;font-weight:bold;letter-spacing:0.5px;color:#000;margin-right:0.5px;">23</div>
<div class="abs" style="left:60px;top:668px;width:1px;height:16px;background:#505050"></div>
<div class="tx" style="left:62px;top:669px;font-size:12px;font-weight:bold;letter-spacing:0.3px;color:#000;">83</div>
<div class="tx" style="left:94px;top:669px;font-size:12px;letter-spacing:-0.67px;color:#000;">1015.23</div>
<svg class="abs" style="left:313px;top:668px" width="22" height="15"><use href="#flag"/></svg>
<div class="tx" style="left:361px;top:669px;font-size:12px;letter-spacing:-0.67px;color:#000;">2699484</div>
<div class="tx" style="left:441px;width:76px;text-align:center;top:669px;font-size:12px;letter-spacing:-0.5px;color:#000;padding-left:-0.5px;">83.0</div>
<div class="tx" style="left:516px;width:76px;text-align:center;top:669px;font-size:12px;letter-spacing:-0.5px;color:#000;padding-left:-0.5px;">2.5</div>
<div class="tx" style="left:591px;width:49px;text-align:right;top:669px;font-size:12px;letter-spacing:-0.67px;color:#000;margin-right:-0.67px;">100.000</div>
<div class="abs" style="left:2px;top:688px;width:91px;height:23px;background:#a2a2a9"></div>
<div class="abs" style="left:93px;top:688px;width:118px;height:23px;background:#fdd6b1"></div>
<div class="abs" style="left:211px;top:688px;width:75px;height:23px;background:#fdd6b1"></div>
<div class="abs" style="left:286px;top:688px;width:75px;height:23px;background:#bfe8fb"></div>
<div class="abs" style="left:361px;top:688px;width:80px;height:23px;background:#6ccef8"></div>
<div class="abs" style="left:441px;top:688px;width:75px;height:23px;background:#ffffff"></div>
<div class="abs" style="left:516px;top:688px;width:75px;height:23px;background:#ffffff"></div>
<div class="abs" style="left:591px;top:688px;width:75px;height:23px;background:#ffffff"></div>
<div class="abs" style="left:93px;top:711px;width:573px;height:1px;background:#d9d9d9"></div>
<div class="abs" style="left:2px;top:711px;width:91px;height:1px;background:#ffffff"></div>
<div class="abs" style="left:93px;top:688px;width:1px;height:23px;background:#d9d9d9"></div>
<div class="abs" style="left:211px;top:688px;width:1px;height:23px;background:#d9d9d9"></div>
<div class="abs" style="left:286px;top:688px;width:1px;height:23px;background:#d9d9d9"></div>
<div class="abs" style="left:361px;top:688px;width:1px;height:23px;background:#d9d9d9"></div>
<div class="abs" style="left:441px;top:688px;width:1px;height:23px;background:#d9d9d9"></div>
<div class="abs" style="left:516px;top:688px;width:1px;height:23px;background:#d9d9d9"></div>
<div class="abs" style="left:591px;top:688px;width:1px;height:23px;background:#d9d9d9"></div>
<div class="abs" style="left:666px;top:688px;width:1px;height:23px;background:#d9d9d9"></div>
<svg class="abs" style="left:238px;top:688px" width="23" height="23"><rect width="23" height="23" fill="url(#tg)"/></svg>
<svg class="abs" style="left:5px;top:689px" width="22" height="22"><use href="#circ"/></svg>
<svg class="abs" style="left:26px;top:692px;color:#2474a6" width="16" height="16"><use href="#docic"/></svg>
<div class="tx" style="left:0px;width:58px;text-align:right;top:693px;font-size:12px;font-weight:bold;letter-spacing:0.5px;color:#000;margin-right:0.5px;">24</div>
<div class="abs" style="left:60px;top:692px;width:1px;height:16px;background:#505050"></div>
<div class="tx" style="left:62px;top:693px;font-size:12px;font-weight:bold;letter-spacing:0.3px;color:#000;">93</div>
<div class="tx" style="left:94px;top:693px;font-size:12px;letter-spacing:-0.67px;color:#000;">1015.25</div>
<svg class="abs" style="left:313px;top:692px" width="22" height="15"><use href="#flag"/></svg>
<div class="tx" style="left:361px;top:693px;font-size:12px;letter-spacing:-0.67px;color:#000;">2900449</div>
<div class="tx" style="left:441px;width:76px;text-align:center;top:693px;font-size:12px;letter-spacing:-0.5px;color:#000;padding-left:-0.5px;">93.0</div>
<div class="tx" style="left:516px;width:76px;text-align:center;top:693px;font-size:12px;letter-spacing:-0.5px;color:#000;padding-left:-0.5px;">3.0</div>
<div class="tx" style="left:591px;width:49px;text-align:right;top:693px;font-size:12px;letter-spacing:-0.67px;color:#000;margin-right:-0.67px;">100.000</div>
<div class="abs" style="left:2px;top:712px;width:91px;height:23px;background:#a2a2a9"></div>
<div class="abs" style="left:93px;top:712px;width:118px;height:23px;background:#e4c4a5"></div>
<div class="abs" style="left:211px;top:712px;width:75px;height:23px;background:#e4c4a5"></div>
<div class="abs" style="left:286px;top:712px;width:75px;height:23px;background:#acd5ea"></div>
<div class="abs" style="left:361px;top:712px;width:80px;height:23px;background:#63bde9"></div>
<div class="abs" style="left:441px;top:712px;width:75px;height:23px;background:#f3f3f3"></div>
<div class="abs" style="left:516px;top:712px;width:75px;height:23px;background:#f3f3f3"></div>
<div class="abs" style="left:591px;top:712px;width:75px;height:23px;background:#f3f3f3"></div>
<div class="abs" style="left:93px;top:735px;width:573px;height:1px;background:#d9d9d9"></div>
<div class="abs" style="left:2px;top:735px;width:91px;height:1px;background:#ffffff"></div>
<div class="abs" style="left:93px;top:712px;width:1px;height:23px;background:#d9d9d9"></div>
<div class="abs" style="left:211px;top:712px;width:1px;height:23px;background:#d9d9d9"></div>
<div class="abs" style="left:286px;top:712px;width:1px;height:23px;background:#d9d9d9"></div>
<div class="abs" style="left:361px;top:712px;width:1px;height:23px;background:#d9d9d9"></div>
<div class="abs" style="left:441px;top:712px;width:1px;height:23px;background:#d9d9d9"></div>
<div class="abs" style="left:516px;top:712px;width:1px;height:23px;background:#d9d9d9"></div>
<div class="abs" style="left:591px;top:712px;width:1px;height:23px;background:#d9d9d9"></div>
<div class="abs" style="left:666px;top:712px;width:1px;height:23px;background:#d9d9d9"></div>
<svg class="abs" style="left:238px;top:712px" width="23" height="23"><rect width="23" height="23" fill="url(#tg)"/></svg>
<svg class="abs" style="left:5px;top:713px" width="22" height="22"><use href="#circ"/></svg>
<svg class="abs" style="left:26px;top:716px;color:#2474a6" width="16" height="16"><use href="#docic"/></svg>
<div class="tx" style="left:0px;width:58px;text-align:right;top:717px;font-size:12px;font-weight:bold;letter-spacing:0.5px;color:#000;margin-right:0.5px;">25</div>
<div class="abs" style="left:60px;top:716px;width:1px;height:16px;background:#505050"></div>
<div class="tx" style="left:62px;top:717px;font-size:12px;font-weight:bold;letter-spacing:0.3px;color:#000;">98</div>
<div class="tx" style="left:94px;top:717px;font-size:12px;letter-spacing:-0.67px;color:#000;">1015.26</div>
<svg class="abs" style="left:313px;top:716px" width="22" height="15"><use href="#flag"/></svg>
<div class="tx" style="left:361px;top:717px;font-size:12px;letter-spacing:-0.67px;color:#000;">2004669</div>
<div class="tx" style="left:441px;width:76px;text-align:center;top:717px;font-size:12px;letter-spacing:-0.5px;color:#000;padding-left:-0.5px;">98.0</div>
<div class="tx" style="left:516px;width:76px;text-align:center;top:717px;font-size:12px;letter-spacing:-0.5px;color:#000;padding-left:-0.5px;">3.0</div>
<div class="tx" style="left:591px;width:49px;text-align:right;top:717px;font-size:12px;letter-spacing:-0.67px;color:#000;margin-right:-0.67px;">100.000</div>
<div class="abs" style="left:2px;top:736px;width:91px;height:23px;background:#a2a2a9"></div>
<div class="abs" style="left:93px;top:736px;width:118px;height:23px;background:#fdd6b1"></div>
<div class="abs" style="left:211px;top:736px;width:75px;height:23px;background:#fdd6b1"></div>
<div class="abs" style="left:286px;top:736px;width:75px;height:23px;background:#bfe8fb"></div>
<div class="abs" style="left:361px;top:736px;width:80px;height:23px;background:#6ccef8"></div>
<div class="abs" style="left:441px;top:736px;width:75px;height:23px;background:#ffffff"></div>
<div class="abs" style="left:516px;top:736px;width:75px;height:23px;background:#ffffff"></div>
<div class="abs" style="left:591px;top:736px;width:75px;height:23px;background:#ffffff"></div>
<div class="abs" style="left:93px;top:759px;width:573px;height:1px;background:#d9d9d9"></div>
<div class="abs" style="left:2px;top:759px;width:91px;height:1px;background:#ffffff"></div>
<div class="abs" style="left:93px;top:736px;width:1px;height:23px;background:#d9d9d9"></div>
<div class="abs" style="left:211px;top:736px;width:1px;height:23px;background:#d9d9d9"></div>
<div class="abs" style="left:286px;top:736px;width:1px;height:23px;background:#d9d9d9"></div>
<div class="abs" style="left:361px;top:736px;width:1px;height:23px;background:#d9d9d9"></div>
<div class="abs" style="left:441px;top:736px;width:1px;height:23px;background:#d9d9d9"></div>
<div class="abs" style="left:516px;top:736px;width:1px;height:23px;background:#d9d9d9"></div>
<div class="abs" style="left:591px;top:736px;width:1px;height:23px;background:#d9d9d9"></div>
<div class="abs" style="left:666px;top:736px;width:1px;height:23px;background:#d9d9d9"></div>
<svg class="abs" style="left:238px;top:736px" width="23" height="23"><rect width="23" height="23" fill="url(#tg)"/></svg>
<svg class="abs" style="left:5px;top:737px" width="22" height="22"><use href="#circ"/></svg>
<svg class="abs" style="left:26px;top:740px;color:#2474a6" width="16" height="16"><use href="#docic"/></svg>
<div class="tx" style="left:0px;width:58px;text-align:right;top:741px;font-size:12px;font-weight:bold;letter-spacing:0.5px;color:#000;margin-right:0.5px;">26</div>
<div class="abs" style="left:60px;top:740px;width:1px;height:16px;background:#505050"></div>
<div class="tx" style="left:62px;top:741px;font-size:12px;font-weight:bold;letter-spacing:0.3px;color:#000;">103</div>
<div class="tx" style="left:94px;top:741px;font-size:12px;letter-spacing:-0.67px;color:#000;">1015.27</div>
<svg class="abs" style="left:313px;top:740px" width="22" height="15"><use href="#flag"/></svg>
<div class="tx" style="left:361px;top:741px;font-size:12px;letter-spacing:-0.67px;color:#000;">2166234</div>
<div class="tx" style="left:441px;width:76px;text-align:center;top:741px;font-size:12px;letter-spacing:-0.5px;color:#000;padding-left:-0.5px;">103.0</div>
<div class="tx" style="left:516px;width:76px;text-align:center;top:741px;font-size:12px;letter-spacing:-0.5px;color:#000;padding-left:-0.5px;">3.0</div>
<div class="tx" style="left:591px;width:49px;text-align:right;top:741px;font-size:12px;letter-spacing:-0.67px;color:#000;margin-right:-0.67px;">100.000</div>
</body></html>
